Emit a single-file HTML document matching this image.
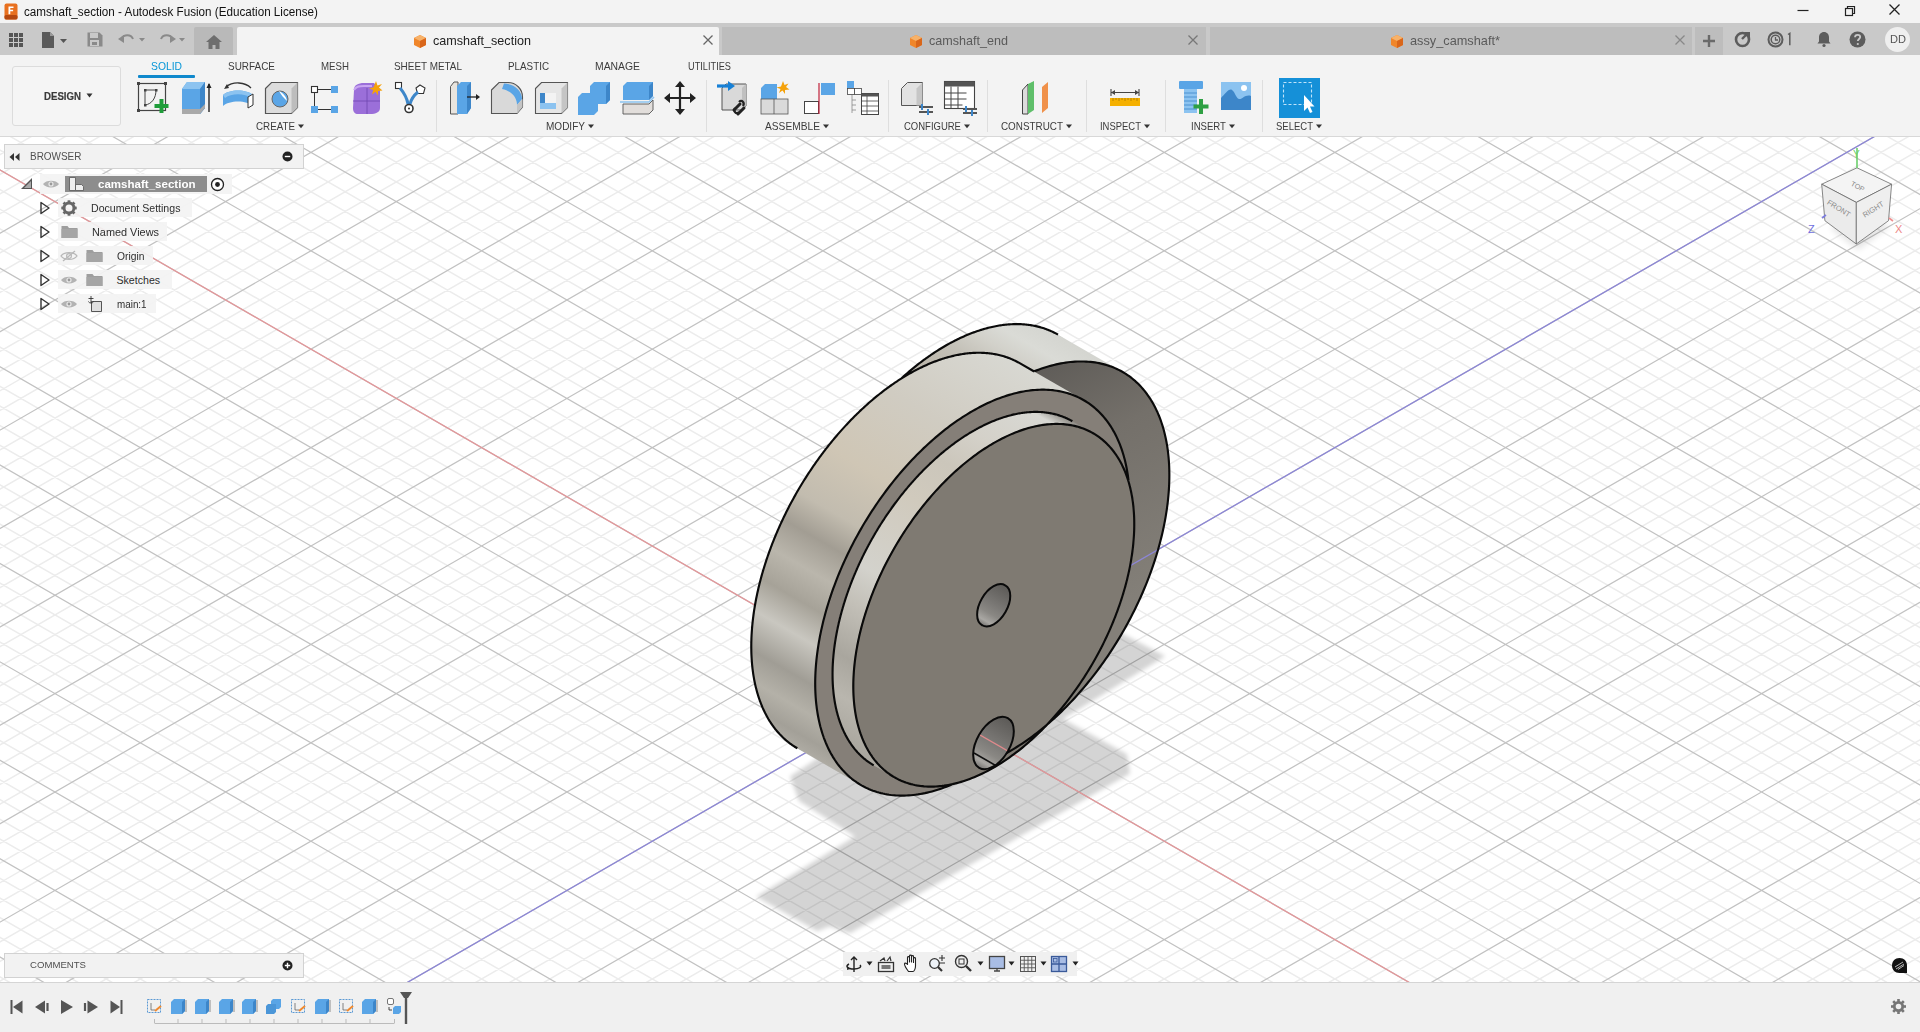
<!DOCTYPE html>
<html><head><meta charset="utf-8"><title>camshaft_section - Autodesk Fusion</title>
<style>
*{box-sizing:border-box;margin:0;padding:0}
html,body{width:1920px;height:1032px;overflow:hidden;background:#f3f3f3;font-family:"Liberation Sans",sans-serif;color:#333;position:relative}
svg{overflow:visible}
</style></head><body>
<svg style="position:absolute;left:0;top:0" width="1920" height="1032" viewBox="0 0 1920 1032"><defs><clipPath id="vpclip"><rect x="0" y="137" width="1920" height="845"/></clipPath></defs><g clip-path="url(#vpclip)"><rect x="0" y="137" width="1920" height="845" fill="#ffffff"/>
<path d="M-10 -977.31L1930 141.30M-10 -957.63L1930 160.98M-10 -937.95L1930 180.66M-10 -898.59L1930 220.02M-10 -878.91L1930 239.70M-10 -859.23L1930 259.38M-10 -839.55L1930 279.06M-10 -800.19L1930 318.42M-10 -780.51L1930 338.10M-10 -760.83L1930 357.78M-10 -741.15L1930 377.46M-10 -701.79L1930 416.82M-10 -682.11L1930 436.50M-10 -662.43L1930 456.18M-10 -642.75L1930 475.86M-10 -603.39L1930 515.22M-10 -583.71L1930 534.90M-10 -564.03L1930 554.58M-10 -544.35L1930 574.26M-10 -504.99L1930 613.62M-10 -485.31L1930 633.30M-10 -465.63L1930 652.98M-10 -445.95L1930 672.66M-10 -406.59L1930 712.02M-10 -386.91L1930 731.70M-10 -367.23L1930 751.38M-10 -347.55L1930 771.06M-10 -308.19L1930 810.42M-10 -288.51L1930 830.10M-10 -268.83L1930 849.78M-10 -249.15L1930 869.46M-10 -209.79L1930 908.82M-10 -190.11L1930 928.50M-10 -170.43L1930 948.18M-10 -150.75L1930 967.86M-10 -111.39L1930 1007.22M-10 -91.71L1930 1026.90M-10 -72.03L1930 1046.58M-10 -52.35L1930 1066.26M-10 -12.99L1930 1105.62M-10 6.69L1930 1125.30M-10 26.37L1930 1144.98M-10 46.05L1930 1164.66M-10 85.41L1930 1204.02M-10 105.09L1930 1223.70M-10 124.77L1930 1243.38M-10 144.45L1930 1263.06M-10 183.81L1930 1302.42M-10 203.49L1930 1322.10M-10 223.17L1930 1341.78M-10 242.85L1930 1361.46M-10 282.21L1930 1400.82M-10 301.89L1930 1420.50M-10 321.57L1930 1440.18M-10 341.25L1930 1459.86M-10 380.61L1930 1499.22M-10 400.29L1930 1518.90M-10 419.97L1930 1538.58M-10 439.65L1930 1558.26M-10 479.01L1930 1597.62M-10 498.69L1930 1617.30M-10 518.37L1930 1636.98M-10 538.05L1930 1656.66M-10 577.41L1930 1696.02M-10 597.09L1930 1715.70M-10 616.77L1930 1735.38M-10 636.45L1930 1755.06M-10 675.81L1930 1794.42M-10 695.49L1930 1814.10M-10 715.17L1930 1833.78M-10 734.85L1930 1853.46M-10 774.21L1930 1892.82M-10 793.89L1930 1912.50M-10 813.57L1930 1932.18M-10 833.25L1930 1951.86M-10 872.61L1930 1991.22M-10 892.29L1930 2010.90M-10 911.97L1930 2030.58M-10 931.65L1930 2050.26M-10 971.01L1930 2089.62M-10 160.35L1930 -958.26M-10 180.03L1930 -938.58M-10 199.71L1930 -918.90M-10 219.39L1930 -899.22M-10 258.75L1930 -859.86M-10 278.43L1930 -840.18M-10 298.11L1930 -820.50M-10 317.79L1930 -800.82M-10 357.15L1930 -761.46M-10 376.83L1930 -741.78M-10 396.51L1930 -722.10M-10 416.19L1930 -702.42M-10 455.55L1930 -663.06M-10 475.23L1930 -643.38M-10 494.91L1930 -623.70M-10 514.59L1930 -604.02M-10 553.95L1930 -564.66M-10 573.63L1930 -544.98M-10 593.31L1930 -525.30M-10 612.99L1930 -505.62M-10 652.35L1930 -466.26M-10 672.03L1930 -446.58M-10 691.71L1930 -426.90M-10 711.39L1930 -407.22M-10 750.75L1930 -367.86M-10 770.43L1930 -348.18M-10 790.11L1930 -328.50M-10 809.79L1930 -308.82M-10 849.15L1930 -269.46M-10 868.83L1930 -249.78M-10 888.51L1930 -230.10M-10 908.19L1930 -210.42M-10 947.55L1930 -171.06M-10 967.23L1930 -151.38M-10 986.91L1930 -131.70M-10 1006.59L1930 -112.02M-10 1045.95L1930 -72.66M-10 1065.63L1930 -52.98M-10 1085.31L1930 -33.30M-10 1104.99L1930 -13.62M-10 1144.35L1930 25.74M-10 1164.03L1930 45.42M-10 1183.71L1930 65.10M-10 1203.39L1930 84.78M-10 1242.75L1930 124.14M-10 1262.43L1930 143.82M-10 1282.11L1930 163.50M-10 1301.79L1930 183.18M-10 1341.15L1930 222.54M-10 1360.83L1930 242.22M-10 1380.51L1930 261.90M-10 1400.19L1930 281.58M-10 1439.55L1930 320.94M-10 1459.23L1930 340.62M-10 1478.91L1930 360.30M-10 1498.59L1930 379.98M-10 1537.95L1930 419.34M-10 1557.63L1930 439.02M-10 1577.31L1930 458.70M-10 1596.99L1930 478.38M-10 1636.35L1930 517.74M-10 1656.03L1930 537.42M-10 1675.71L1930 557.10M-10 1695.39L1930 576.78M-10 1734.75L1930 616.14M-10 1754.43L1930 635.82M-10 1774.11L1930 655.50M-10 1793.79L1930 675.18M-10 1833.15L1930 714.54M-10 1852.83L1930 734.22M-10 1872.51L1930 753.90M-10 1892.19L1930 773.58M-10 1931.55L1930 812.94M-10 1951.23L1930 832.62M-10 1970.91L1930 852.30M-10 1990.59L1930 871.98M-10 2029.95L1930 911.34M-10 2049.63L1930 931.02M-10 2069.31L1930 950.70M-10 2088.99L1930 970.38" stroke="#ececec" stroke-width="1.5" fill="none"/><path d="M-10 -918.27L1930 200.34M-10 -819.87L1930 298.74M-10 -721.47L1930 397.14M-10 -623.07L1930 495.54M-10 -524.67L1930 593.94M-10 -426.27L1930 692.34M-10 -327.87L1930 790.74M-10 -229.47L1930 889.14M-10 -131.07L1930 987.54M-10 -32.67L1930 1085.94M-10 65.73L1930 1184.34M-10 164.13L1930 1282.74M-10 262.53L1930 1381.14M-10 360.93L1930 1479.54M-10 459.33L1930 1577.94M-10 557.73L1930 1676.34M-10 656.13L1930 1774.74M-10 754.53L1930 1873.14M-10 852.93L1930 1971.54M-10 951.33L1930 2069.94M-10 140.67L1930 -977.94M-10 239.07L1930 -879.54M-10 337.47L1930 -781.14M-10 435.87L1930 -682.74M-10 534.27L1930 -584.34M-10 632.67L1930 -485.94M-10 731.07L1930 -387.54M-10 829.47L1930 -289.14M-10 927.87L1930 -190.74M-10 1026.27L1930 -92.34M-10 1124.67L1930 6.06M-10 1223.07L1930 104.46M-10 1321.47L1930 202.86M-10 1419.87L1930 301.26M-10 1518.27L1930 399.66M-10 1616.67L1930 498.06M-10 1715.07L1930 596.46M-10 1813.47L1930 694.86M-10 1911.87L1930 793.26M-10 2010.27L1930 891.66" stroke="#c2c2c2" stroke-width="1.25" fill="none"/>
<filter id="blur" x="-10%" y="-10%" width="120%" height="120%"><feGaussianBlur stdDeviation="2.2"/></filter><polygon points="1124.0,634.5 1165.3,656.3 1063.0,719.0 1127.0,754.3 1130.0,773.5 849.9,933.3 829.5,926.2 817.3,931.3 756.3,896.7 855.0,836.5 799.0,801.0 790.0,776.6 809.0,764.0 900.0,700.0 1050.0,600.0" fill="#000" fill-opacity="0.17" filter="url(#blur)"/>
<path d="M-10 164.13L1930 1282.74" stroke="#e3979a" stroke-width="1.3" fill="none"/>
<path d="M-10 1223.07L1930 104.46" stroke="#8c86d6" stroke-width="1.3" fill="none"/>
<defs><linearGradient id="gA" gradientUnits="userSpaceOnUse" x1="1090.36" y1="353.33" x2="865.06" y2="743.54"><stop offset="0.000" stop-color="#d4d5d0"/><stop offset="0.050" stop-color="#dadbd6"/><stop offset="0.090" stop-color="#d2d1ca"/><stop offset="0.140" stop-color="#c4c1b8"/><stop offset="0.200" stop-color="#bdb8ad"/><stop offset="0.300" stop-color="#b5b0a4"/><stop offset="1.000" stop-color="#a8a398"/></linearGradient><linearGradient id="gB" gradientUnits="userSpaceOnUse" x1="1051.64" y1="381.63" x2="829.29" y2="766.76"><stop offset="0.000" stop-color="#d8d8d2"/><stop offset="0.200" stop-color="#d0ccc2"/><stop offset="0.380" stop-color="#cfc6b5"/><stop offset="0.500" stop-color="#c2bcaf"/><stop offset="0.570" stop-color="#a29d93"/><stop offset="0.640" stop-color="#bab6ac"/><stop offset="0.710" stop-color="#a6a298"/><stop offset="0.780" stop-color="#c9c7c0"/><stop offset="0.860" stop-color="#a09d95"/><stop offset="0.920" stop-color="#b4b1a8"/><stop offset="0.970" stop-color="#a3a098"/><stop offset="1.000" stop-color="#aeaba3"/></linearGradient><linearGradient id="gC" gradientUnits="userSpaceOnUse" x1="1082.73" y1="427.22" x2="884.07" y2="771.31"><stop offset="0.000" stop-color="#8f8c86"/><stop offset="0.030" stop-color="#d8d8d3"/><stop offset="0.150" stop-color="#d4d1c9"/><stop offset="0.250" stop-color="#cbc6bb"/><stop offset="0.370" stop-color="#d0cabd"/><stop offset="0.580" stop-color="#d3d2cc"/><stop offset="0.670" stop-color="#c3c0b8"/><stop offset="0.800" stop-color="#a9a69e"/><stop offset="0.890" stop-color="#b9b6ae"/><stop offset="1.000" stop-color="#a8a59d"/></linearGradient><linearGradient id="gAf" gradientUnits="userSpaceOnUse" x1="1030.00" y1="370.00" x2="1150.00" y2="600.00"><stop offset="0.000" stop-color="#5f5c58"/><stop offset="0.350" stop-color="#74706a"/><stop offset="1.000" stop-color="#848079"/></linearGradient></defs>
<path d="M1058.02 334.65A225.29 130.07 -60 1 1 832.72 724.87A225.29 130.07 -60 1 1 1058.02 334.65Z" fill="url(#gA)" /><polygon points="1058.02,334.65 1122.70,372.00 897.40,762.22 832.72,724.87" fill="url(#gA)" /><path d="M1122.70 372.00A225.29 130.07 -60 1 1 897.40 762.22A225.29 130.07 -60 1 1 1122.70 372.00Z" fill="url(#gA)" />
<path d="M1122.70 372.00A225.29 130.07 -60 1 1 897.40 762.22A225.29 130.07 -60 1 1 1122.70 372.00Z" fill="url(#gAf)" />
<clipPath id="cpAf"><path d="M1122.70 372.00A225.29 130.07 -60 1 1 897.40 762.22A225.29 130.07 -60 1 1 1122.70 372.00Z" fill="#000" /></clipPath>
<path d="M1000 640.70L1250 496.55" stroke="#8c86d6" stroke-width="1.3" clip-path="url(#cpAf)"/>
<path d="M1019.68 363.18A222.35 128.38 -60 1 1 797.32 748.30A222.35 128.38 -60 1 1 1019.68 363.18Z" fill="url(#gB)" /><polygon points="1019.68,363.18 1083.61,400.09 861.25,785.21 797.32,748.30" fill="url(#gB)" /><path d="M1083.61 400.09A222.35 128.38 -60 1 1 861.25 785.21A222.35 128.38 -60 1 1 1083.61 400.09Z" fill="url(#gB)" />
<path d="M1083.61 400.09A222.35 128.38 -60 1 1 861.25 785.21A222.35 128.38 -60 1 1 1083.61 400.09Z" fill="#857f78" />
<path d="M1072.35 421.22A198.67 114.70 -60 1 1 873.69 765.32A198.67 114.70 -60 1 1 1072.35 421.22Z" fill="url(#gC)" /><polygon points="1072.35,421.22 1093.11,433.21 894.45,777.31 873.69,765.32" fill="url(#gC)" /><path d="M1093.11 433.21A198.67 114.70 -60 1 1 894.45 777.31A198.67 114.70 -60 1 1 1093.11 433.21Z" fill="url(#gC)" />
<path d="M1093.11 433.21A198.67 114.70 -60 1 1 894.45 777.31A198.67 114.70 -60 1 1 1093.11 433.21Z" fill="#7f7a72" />
<path d="M1058.02 334.65L1057.13 334.15L1056.23 333.65L1055.32 333.17L1054.41 332.70L1053.50 332.24L1052.57 331.80L1051.64 331.37L1050.70 330.94L1049.76 330.54L1048.81 330.14L1047.85 329.76L1046.89 329.39L1045.92 329.03L1044.94 328.68L1043.96 328.35L1042.97 328.03L1041.98 327.72L1040.97 327.42L1039.97 327.14L1038.96 326.87L1037.94 326.61L1036.91 326.36L1035.89 326.13L1034.85 325.91L1033.81 325.70L1032.76 325.50L1031.71 325.32L1030.66 325.15L1029.59 324.99L1028.53 324.85L1027.45 324.72L1026.38 324.60L1025.29 324.49L1024.21 324.40L1023.11 324.32L1022.02 324.25L1020.92 324.19L1019.81 324.15L1018.70 324.12L1017.58 324.10L1016.46 324.10L1015.34 324.11L1014.21 324.13L1013.07 324.16L1011.94 324.21L1010.79 324.27L1009.65 324.34L1008.50 324.42L1007.35 324.52L1006.19 324.63L1005.03 324.75L1003.86 324.89L1002.69 325.04L1001.52 325.20L1000.35 325.37L999.17 325.56L997.99 325.76L996.80 325.97L995.61 326.19L994.42 326.43L993.22 326.68L992.03 326.94L990.83 327.21L989.62 327.50L988.42 327.80L987.21 328.11L986.00 328.44L984.78 328.77L983.56 329.12L982.35 329.49L981.12 329.86L979.90 330.25L978.68 330.65L977.45 331.06L976.22 331.48L974.99 331.92L973.75 332.37L972.52 332.83L971.28 333.30L970.04 333.78L968.80 334.28L967.56 334.79L966.32 335.31L965.07 335.85L963.83 336.39L962.58 336.95L961.34 337.52L960.09 338.10L958.84 338.69L957.59 339.30L956.34 339.91L955.08 340.54L953.83 341.18L952.58 341.84L951.33 342.50L950.07 343.17L948.82 343.86L947.56 344.56L946.31 345.27L945.06 345.99L943.80 346.72L942.55 347.47L941.29 348.22L940.04 348.99L938.79 349.77L937.53 350.56L936.28 351.36L935.03 352.17L933.78 352.99L932.53 353.82L931.28 354.67L930.03 355.52L928.78 356.39L927.53 357.26L926.29 358.15L925.04 359.05L923.80 359.96L922.56 360.88L921.32 361.81L920.08 362.75L918.84 363.70L917.60 364.66L916.37 365.63L915.14 366.61L913.91 367.60L912.68 368.60L911.45 369.61L910.23 370.63L909.00 371.66L907.78 372.70L906.57 373.75L905.35 374.81L904.14 375.88L902.93 376.96L901.72 378.05M997.10 757.93L999.60 756.69L1002.11 755.42L1004.62 754.09L1007.12 752.72L1009.63 751.30L1012.14 749.84L1014.65 748.33L1017.16 746.77L1019.66 745.18L1022.16 743.53L1024.66 741.85L1027.16 740.12L1029.65 738.35L1032.14 736.53L1034.62 734.67L1037.10 732.78L1039.56 730.84L1042.03 728.86L1044.48 726.84L1046.92 724.78L1049.36 722.68L1051.79 720.54L1054.20 718.36L1056.61 716.15L1059.00 713.90L1061.38 711.61L1063.75 709.29L1066.10 706.93L1068.45 704.54L1070.77 702.12L1073.08 699.66L1075.38 697.16L1077.66 694.64L1079.92 692.08L1082.17 689.49L1084.40 686.88L1086.61 684.23L1088.80 681.55L1090.97 678.85L1093.12 676.11L1095.25 673.35L1097.36 670.57L1099.44 667.76L1101.51 664.92L1103.55 662.06L1105.57 659.17L1107.57 656.27L1109.54 653.34L1111.49 650.39L1113.41 647.42L1115.30 644.42L1117.17 641.41L1119.02 638.38L1120.83 635.34L1122.62 632.27L1124.38 629.19L1126.12 626.10L1127.82 622.99L1129.49 619.87L1131.14 616.73L1132.75 613.58L1134.34 610.42L1135.89 607.25L1137.42 604.07L1138.91 600.88L1140.37 597.68L1141.79 594.47L1143.19 591.26L1144.55 588.04L1145.87 584.82L1147.17 581.59L1148.43 578.35L1149.65 575.12L1150.85 571.88L1152.00 568.64L1153.12 565.41L1154.21 562.17L1155.26 558.93L1156.27 555.70L1157.25 552.46L1158.19 549.24L1159.09 546.01L1159.96 542.79L1160.79 539.58L1161.58 536.37L1162.34 533.18L1163.06 529.99L1163.74 526.80L1164.38 523.63L1164.98 520.47L1165.55 517.33L1166.07 514.19L1166.56 511.07L1167.01 507.96L1167.42 504.86L1167.79 501.78L1168.12 498.72L1168.41 495.68L1168.66 492.65L1168.88 489.64L1169.05 486.65L1169.19 483.68L1169.28 480.73L1169.34 477.80L1169.36 474.89L1169.33 472.01L1169.27 469.15L1169.17 466.32L1169.03 463.50L1168.85 460.72L1168.62 457.96L1168.37 455.23L1168.07 452.53L1167.73 449.85L1167.35 447.21L1166.94 444.59L1166.48 442.00L1165.99 439.45L1165.45 436.93L1164.88 434.43L1164.27 431.98L1163.63 429.55L1162.94 427.16L1162.22 424.81L1161.45 422.49L1160.66 420.20L1159.82 417.95L1158.95 415.74L1158.04 413.57L1157.09 411.43L1156.10 409.34L1155.09 407.28L1154.03 405.26L1152.94 403.28L1151.81 401.34L1150.65 399.45L1149.45 397.59L1148.22 395.78L1146.96 394.01L1145.66 392.28L1144.32 390.60L1142.96 388.96L1141.56 387.36L1140.12 385.81L1138.66 384.30L1137.16 382.84L1135.64 381.43L1134.08 380.06L1132.49 378.74L1130.87 377.46L1129.22 376.23L1127.54 375.05L1125.83 373.91L1124.09 372.83L1122.33 371.79L1120.53 370.80L1118.71 369.86L1116.86 368.97L1114.99 368.12L1113.09 367.33L1111.16 366.59L1109.21 365.89L1107.24 365.25L1105.24 364.65L1103.21 364.11L1101.17 363.61L1099.10 363.17L1097.01 362.78L1094.89 362.43L1092.76 362.14L1090.61 361.90L1088.43 361.71L1086.24 361.57L1084.03 361.49L1081.80 361.45L1079.55 361.46L1077.28 361.53L1075.00 361.64L1072.70 361.81L1070.39 362.03L1068.06 362.30L1065.71 362.62L1063.36 362.99L1060.98 363.41L1058.60 363.88L1056.21 364.40L1053.80 364.97L1051.38 365.60L1048.95 366.27L1046.52 366.99L1044.07 367.76L1041.62 368.58L1039.15 369.45L1036.68 370.37L1034.21 371.34M1019.68 363.18L1018.80 362.68L1017.91 362.19L1017.02 361.71L1016.12 361.25L1015.21 360.80L1014.30 360.36L1013.38 359.93L1012.46 359.52L1011.53 359.12L1010.59 358.73L1009.64 358.35L1008.69 357.98L1007.73 357.63L1006.77 357.28L1005.80 356.96L1004.83 356.64L1003.84 356.33L1002.86 356.04L1001.86 355.76L1000.87 355.49L999.86 355.24L998.85 355.00L997.83 354.77L996.81 354.55L995.79 354.34L994.75 354.15L993.72 353.97L992.67 353.80L991.62 353.65L990.57 353.50L989.51 353.37L988.45 353.26L987.38 353.15L986.31 353.06L985.23 352.98L984.15 352.91L983.06 352.85L981.97 352.81L980.87 352.78L979.77 352.77L978.66 352.76L977.55 352.77L976.44 352.79L975.32 352.82L974.20 352.87L973.07 352.93L971.94 353.00L970.81 353.08L969.67 353.18L968.53 353.29L967.38 353.41L966.23 353.54L965.08 353.69L963.92 353.85L962.76 354.02L961.60 354.20L960.43 354.40L959.26 354.61L958.09 354.83L956.91 355.06L955.73 355.31L954.55 355.57L953.36 355.84L952.17 356.12L950.98 356.42L949.79 356.72L948.60 357.04L947.40 357.38L946.20 357.72L944.99 358.08L943.79 358.45L942.58 358.83L941.37 359.22L940.16 359.63L938.95 360.05L937.73 360.48L936.51 360.92L935.29 361.38L934.07 361.84L932.85 362.32L931.63 362.81L930.40 363.31L929.18 363.83L927.95 364.36L926.72 364.89L925.49 365.44L924.26 366.01L923.03 366.58L921.79 367.17L920.56 367.76L919.32 368.37L918.09 368.99L916.85 369.62L915.62 370.27L914.38 370.92L913.14 371.59L911.90 372.27L910.67 372.96L909.43 373.66L908.19 374.37L906.95 375.09L905.71 375.83L904.48 376.57L903.24 377.33L902.00 378.10L900.77 378.88L899.53 379.66L898.29 380.47L897.06 381.28L895.82 382.10L894.59 382.93L893.36 383.78L892.13 384.63L890.90 385.50L889.67 386.37L888.44 387.26L887.21 388.15L885.99 389.06L884.76 389.98L883.54 390.90L882.32 391.84L881.10 392.79L879.88 393.75L878.66 394.72L877.45 395.69L876.23 396.68L875.02 397.68L873.82 398.69L872.61 399.71L871.41 400.73L870.20 401.77L869.00 402.81L867.81 403.87L866.61 404.94L865.42 406.01L864.23 407.09L863.04 408.19L861.86 409.29L860.68 410.40L859.50 411.52L858.33 412.65L857.16 413.79L855.99 414.93L854.82 416.09L853.66 417.25L852.50 418.43L851.35 419.61L850.20 420.80L849.05 421.99L847.90 423.20L846.76 424.42L845.63 425.64L844.49 426.87L843.36 428.11L842.24 429.35L841.12 430.61L840.00 431.87L838.89 433.14L837.78 434.42L836.68 435.70L835.58 437.00L834.49 438.30L833.40 439.60L832.31 440.92L831.23 442.24L830.15 443.57L829.08 444.90L828.02 446.25L826.96 447.59L825.90 448.95L824.85 450.31L823.80 451.68L822.76 453.06L821.73 454.44L820.70 455.83L819.68 457.22L818.66 458.62L817.64 460.03L816.64 461.44L815.63 462.86L814.64 464.28L813.65 465.71L812.66 467.15L811.69 468.59L810.71 470.03L809.75 471.48L808.79 472.94L807.83 474.40L806.88 475.87L805.94 477.34L805.01 478.82L804.08 480.30L803.16 481.79L802.24 483.28L801.33 484.77L800.43 486.27L799.53 487.77L798.64 489.28L797.76 490.79L796.89 492.31L796.02 493.83L795.16 495.36L794.30 496.88L793.46 498.41L792.62 499.95L791.78 501.49L790.96 503.03L790.14 504.57L789.33 506.12L788.52 507.67L787.73 509.23L786.94 510.78L786.16 512.34L785.38 513.91L784.62 515.47L783.86 517.04L783.11 518.61L782.36 520.18L781.63 521.76L780.90 523.33L780.18 524.91L779.47 526.49L778.77 528.08L778.07 529.66L777.39 531.25L776.71 532.83L776.03 534.42L775.37 536.01L774.72 537.60L774.07 539.19L773.43 540.79L772.80 542.38L772.18 543.98L771.57 545.57L770.97 547.17L770.37 548.77L769.78 550.36L769.21 551.96L768.64 553.56L768.07 555.16L767.52 556.76L766.98 558.35L766.44 559.95L765.92 561.55L765.40 563.15L764.89 564.74L764.39 566.34L763.90 567.94L763.42 569.53L762.95 571.13L762.48 572.72L762.03 574.31L761.58 575.90L761.15 577.49L760.72 579.08L760.30 580.67L759.89 582.25L759.49 583.83L759.10 585.42L758.72 587.00L758.35 588.58L757.99 590.15L757.63 591.73L757.29 593.30L756.96 594.87L756.63 596.43L756.31 598.00L756.01 599.56L755.71 601.12L755.42 602.68L755.15 604.23L754.88 605.78L754.62 607.33L754.37 608.87L754.13 610.41L753.90 611.95L753.68 613.48L753.47 615.01L753.27 616.54L753.08 618.06L752.89 619.58L752.72 621.10L752.56 622.61L752.41 624.11L752.26 625.62L752.13 627.12L752.00 628.61L751.89 630.10L751.78 631.58L751.69 633.06L751.60 634.54L751.53 636.01L751.46 637.47L751.41 638.93L751.36 640.39L751.32 641.84L751.30 643.28L751.28 644.72L751.27 646.16L751.28 647.59L751.29 649.01L751.31 650.42L751.34 651.84L751.38 653.24L751.43 654.64L751.50 656.03L751.57 657.42L751.65 658.80L751.74 660.17L751.84 661.54L751.95 662.90L752.06 664.25L752.19 665.60L752.33 666.94L752.48 668.27L752.64 669.60L752.81 670.92L752.98 672.23L753.17 673.54L753.37 674.84L753.57 676.13L753.79 677.41L754.01 678.68L754.25 679.95L754.49 681.21L754.75 682.47L755.01 683.71L755.28 684.95L755.57 686.17L755.86 687.40L756.16 688.61L756.47 689.81L756.79 691.01L757.12 692.19L757.46 693.37L757.81 694.54L758.17 695.71L758.53 696.86L758.91 698.00L759.30 699.14L759.69 700.27L760.10 701.38L760.51 702.49L760.93 703.59L761.36 704.68L761.81 705.76L762.26 706.83L762.71 707.90L763.18 708.95L763.66 709.99L764.15 711.03L764.64 712.05L765.14 713.07L765.66 714.07L766.18 715.07L766.71 716.05L767.25 717.03L767.80 717.99L768.35 718.95L768.92 719.89L769.49 720.83L770.08 721.75L770.67 722.67L771.27 723.57L771.88 724.47L772.49 725.35L773.12 726.22L773.75 727.08L774.39 727.93L775.04 728.78L775.70 729.61L776.37 730.42L777.04 731.23L777.73 732.03L778.42 732.82L779.12 733.59L779.83 734.36L780.54 735.11L781.26 735.85L782.00 736.59L782.73 737.31L783.48 738.01L784.24 738.71L785.00 739.40L785.77 740.07L786.55 740.74L787.33 741.39L788.12 742.03L788.92 742.66L789.73 743.27L790.55 743.88L791.37 744.47L792.20 745.06L793.03 745.63L793.88 746.19L794.73 746.73L795.59 747.27L796.45 747.79L797.32 748.30M1019.68 363.18L1034.18 371.55M972.43 411.10L969.95 412.55L967.48 414.05L965.01 415.59L962.53 417.17L960.06 418.80L957.60 420.47L955.13 422.19L952.68 423.94L950.22 425.74L947.77 427.58L945.33 429.46L942.90 431.38L940.47 433.34L938.05 435.34L935.64 437.38L933.23 439.46L930.84 441.58L928.46 443.73L926.09 445.92L923.73 448.15L921.38 450.41L919.04 452.71L916.72 455.04L914.41 457.41L912.12 459.81L909.84 462.24L907.58 464.71L905.33 467.20L903.10 469.73L900.89 472.29L898.69 474.88L896.51 477.50L894.35 480.14L892.21 482.82L890.09 485.52L888.00 488.25L885.92 491.00L883.86 493.78L881.83 496.59L879.81 499.41L877.83 502.26L875.86 505.14L873.92 508.03L872.00 510.95L870.11 513.88L868.24 516.84L866.40 519.81L864.58 522.81L862.80 525.82L861.04 528.84L859.30 531.88L857.60 534.94L855.92 538.01L854.27 541.10L852.65 544.20L851.06 547.31L849.51 550.43L847.98 553.56L846.48 556.70L845.01 559.85L843.58 563.01L842.18 566.17L840.80 569.35L839.47 572.52L838.16 575.71L836.89 578.89L835.65 582.08L834.45 585.28L833.28 588.47L832.14 591.67L831.04 594.86L829.98 598.06L828.95 601.26L827.95 604.45L826.99 607.64L826.07 610.82L825.19 614.00L824.34 617.18L823.52 620.35L822.75 623.51L822.01 626.67L821.31 629.81L820.64 632.95L820.01 636.08L819.43 639.20L818.87 642.30L818.36 645.39L817.89 648.47L817.45 651.54L817.05 654.59L816.69 657.63L816.37 660.65L816.09 663.65L815.85 666.64L815.64 669.60L815.48 672.55L815.35 675.48L815.26 678.39L815.21 681.27L815.20 684.14L815.23 686.98L815.30 689.80L815.41 692.59L815.56 695.36L815.74 698.11L815.96 700.83L816.23 703.52L816.53 706.18L816.87 708.82L817.25 711.42L817.66 714.00L818.12 716.55L818.61 719.06L819.15 721.55L819.72 724.00L820.32 726.42L820.97 728.81L821.65 731.16L822.37 733.48L823.13 735.77L823.92 738.01L824.76 740.23L825.62 742.40L826.53 744.54L827.47 746.64L828.45 748.71L829.46 750.73L830.51 752.72L831.59 754.66L832.71 756.57L833.86 758.43L835.05 760.26L836.27 762.04L837.52 763.78L838.81 765.48L840.13 767.13L841.49 768.74L842.87 770.31L844.29 771.83L845.74 773.31L847.22 774.75L848.74 776.14L850.28 777.48L851.85 778.78L853.46 780.03L855.09 781.24L856.75 782.40L858.45 783.51L860.17 784.57L861.91 785.59L863.69 786.56L865.49 787.48L867.32 788.35L869.17 789.17L871.05 789.95L872.96 790.68L874.89 791.35L876.84 791.98L878.82 792.56L880.82 793.09L882.84 793.57L884.89 794.00L886.95 794.38L889.04 794.71L891.15 794.99L893.28 795.21L895.43 795.39L897.60 795.52L899.78 795.60L901.99 795.63L904.21 795.61L906.45 795.53L908.71 795.41L910.98 795.24L913.26 795.01L915.57 794.74L917.88 794.42L920.21 794.04L922.55 793.62L924.91 793.15L927.27 792.62L929.65 792.05L932.04 791.43L934.43 790.76L936.84 790.04L939.26 789.27L941.68 788.45L944.11 787.58L946.55 786.66L949.00 785.70L951.45 784.69M1128.49 480.45L1128.17 477.80L1127.81 475.18L1127.41 472.59L1126.97 470.02L1126.50 467.49L1125.99 464.99L1125.43 462.52L1124.85 460.08L1124.22 457.68L1123.55 455.31L1122.85 452.97L1122.11 450.67L1121.34 448.41L1120.52 446.17L1119.67 443.98L1118.79 441.82L1117.87 439.70L1116.91 437.62L1115.91 435.58L1114.88 433.57L1113.82 431.61L1112.72 429.68L1111.58 427.79L1110.41 425.95L1109.21 424.15L1107.97 422.39L1106.70 420.67L1105.39 418.99L1104.06 417.36L1102.68 415.77L1101.28 414.22L1099.85 412.72L1098.38 411.26L1096.88 409.85L1095.35 408.48L1093.80 407.16L1092.21 405.89L1090.59 404.66L1088.94 403.48L1087.26 402.34L1085.56 401.25L1083.82 400.21L1082.06 399.22L1080.28 398.28L1078.46 397.38L1076.62 396.53L1074.75 395.73L1072.86 394.98L1070.94 394.28L1069.00 393.63L1067.03 393.02L1065.05 392.47L1063.03 391.97L1061.00 391.51L1058.94 391.11L1056.86 390.75L1054.77 390.45L1052.65 390.19L1050.51 389.99L1048.35 389.84L1046.17 389.73L1043.97 389.68L1041.76 389.68L1039.53 389.72L1037.28 389.82L1035.02 389.97L1032.74 390.17L1030.45 390.42L1028.14 390.71L1025.82 391.06L1023.48 391.46L1021.13 391.91L1018.77 392.41L1016.40 392.96L1014.02 393.56L1011.63 394.20L1009.22 394.90L1006.81 395.64L1004.39 396.44L1001.96 397.28L999.53 398.17L997.09 399.11L994.64 400.10L992.18 401.13L989.73 402.22L987.26 403.35L984.80 404.52L982.33 405.75L979.85 407.02L977.38 408.33L974.91 409.69L972.43 411.10M1072.35 421.22L1071.57 420.77L1070.78 420.34L1069.98 419.91L1069.18 419.50L1068.37 419.10L1067.55 418.70L1066.73 418.32L1065.90 417.95L1065.07 417.59L1064.23 417.24L1063.39 416.90L1062.54 416.58L1061.68 416.26L1060.82 415.96L1059.96 415.66L1059.08 415.38L1058.21 415.11L1057.33 414.84L1056.44 414.59L1055.55 414.36L1054.65 414.13L1053.75 413.91L1052.84 413.70L1051.93 413.51L1051.01 413.33L1050.09 413.15L1049.16 412.99L1048.23 412.84L1047.29 412.70L1046.35 412.58L1045.40 412.46L1044.45 412.36L1043.50 412.26L1042.54 412.18L1041.58 412.11L1040.61 412.05L1039.64 412.00L1038.66 411.96L1037.68 411.93L1036.70 411.92L1035.71 411.91L1034.72 411.92L1033.72 411.94L1032.72 411.97L1031.72 412.01L1030.71 412.06L1029.70 412.13L1028.69 412.20L1027.67 412.29L1026.65 412.38L1025.63 412.49L1024.60 412.61L1023.57 412.74L1022.54 412.88L1021.50 413.04L1020.46 413.20L1019.42 413.38L1018.37 413.56L1017.32 413.76L1016.27 413.97L1015.22 414.19L1014.16 414.42L1013.10 414.66L1012.04 414.91L1010.98 415.18L1009.91 415.45L1008.84 415.74L1007.77 416.04L1006.70 416.35L1005.63 416.66L1004.55 417.00L1003.47 417.34L1002.39 417.69L1001.31 418.05L1000.22 418.42L999.14 418.81L998.05 419.20L996.96 419.61L995.87 420.03L994.78 420.46L993.68 420.89L992.59 421.34L991.49 421.80L990.40 422.27L989.30 422.75L988.20 423.25L987.10 423.75L986.00 424.26L984.90 424.78L983.79 425.32L982.69 425.86L981.59 426.42L980.48 426.98L979.38 427.56L978.27 428.14L977.17 428.74L976.06 429.34L974.96 429.96L973.85 430.58L972.74 431.22L971.64 431.87L970.53 432.52L969.43 433.19L968.32 433.86L967.21 434.55L966.11 435.25L965.01 435.95L963.90 436.67L962.80 437.39L961.70 438.13L960.59 438.87L959.49 439.62L958.39 440.39L957.29 441.16L956.19 441.94L955.10 442.73L954.00 443.54L952.90 444.35L951.81 445.17L950.72 445.99L949.63 446.83L948.54 447.68L947.45 448.53L946.36 449.40L945.28 450.27L944.19 451.16L943.11 452.05L942.03 452.95L940.95 453.86L939.88 454.77L938.80 455.70L937.73 456.64L936.66 457.58L935.59 458.53L934.53 459.49L933.47 460.46L932.41 461.43L931.35 462.42L930.29 463.41L929.24 464.41L928.19 465.42L927.15 466.44L926.10 467.46L925.06 468.50L924.02 469.54L922.99 470.58L921.96 471.64L920.93 472.70L919.90 473.77L918.88 474.85L917.86 475.94L916.84 477.03L915.83 478.13L914.82 479.23L913.82 480.35L912.82 481.47L911.82 482.60L910.83 483.73L909.84 484.87L908.85 486.02L907.87 487.18L906.89 488.34L905.92 489.50L904.95 490.68L903.98 491.86L903.02 493.05L902.06 494.24L901.11 495.44L900.16 496.64L899.22 497.86L898.28 499.07L897.35 500.30L896.42 501.53L895.49 502.76L894.57 504.00L893.66 505.25L892.75 506.50L891.84 507.75L890.94 509.02L890.05 510.28L889.16 511.55L888.27 512.83L887.39 514.11L886.52 515.40L885.65 516.69L884.79 517.99L883.93 519.29L883.08 520.60L882.23 521.91L881.39 523.22L880.55 524.54L879.72 525.87L878.90 527.19L878.08 528.53L877.27 529.86L876.46 531.20L875.66 532.54L874.87 533.89L874.08 535.24L873.30 536.60L872.52 537.96L871.75 539.32L870.99 540.68L870.23 542.05L869.48 543.42L868.74 544.80L868.00 546.17L867.27 547.55L866.54 548.94L865.82 550.32L865.11 551.71L864.41 553.10L863.71 554.50L863.02 555.89L862.33 557.29L861.66 558.69L860.98 560.10L860.32 561.50L859.66 562.91L859.01 564.32L858.37 565.73L857.74 567.14L857.11 568.55L856.49 569.97L855.87 571.38L855.27 572.80L854.67 574.22L854.07 575.64L853.49 577.06L852.91 578.49L852.34 579.91L851.78 581.34L851.22 582.76L850.68 584.19L850.14 585.61L849.61 587.04L849.08 588.47L848.56 589.89L848.05 591.32L847.55 592.75L847.06 594.18L846.57 595.61L846.10 597.03L845.63 598.46L845.16 599.89L844.71 601.32L844.26 602.74L843.82 604.17L843.39 605.59L842.97 607.02L842.56 608.44L842.15 609.86L841.75 611.28L841.36 612.70L840.98 614.12L840.61 615.54L840.24 616.96L839.89 618.37L839.54 619.79L839.20 621.20L838.86 622.61L838.54 624.02L838.23 625.42L837.92 626.83L837.62 628.23L837.33 629.63L837.05 631.03L836.77 632.42L836.51 633.81L836.25 635.21L836.00 636.59L835.76 637.98L835.53 639.36L835.31 640.74L835.09 642.12L834.89 643.49L834.69 644.86L834.50 646.23L834.32 647.59L834.15 648.95L833.99 650.31L833.84 651.66L833.69 653.01L833.55 654.36L833.43 655.70L833.31 657.04L833.20 658.38L833.09 659.71L833.00 661.03L832.91 662.36L832.84 663.67L832.77 664.99L832.71 666.30L832.66 667.60L832.62 668.90L832.59 670.20L832.56 671.49L832.55 672.77L832.54 674.06L832.54 675.33L832.56 676.60L832.58 677.87L832.60 679.13L832.64 680.38L832.69 681.63L832.74 682.88L832.80 684.12L832.88 685.35L832.96 686.58L833.04 687.80L833.14 689.01L833.25 690.22L833.36 691.43L833.49 692.62L833.62 693.82L833.76 695.00L833.91 696.18L834.07 697.35L834.24 698.52L834.41 699.68L834.60 700.83L834.79 701.98L834.99 703.12L835.20 704.25L835.42 705.38L835.65 706.50L835.88 707.61L836.13 708.71L836.38 709.81L836.64 710.90L836.91 711.98L837.19 713.06L837.47 714.13L837.77 715.19L838.07 716.24L838.38 717.29L838.70 718.33L839.03 719.36L839.37 720.38L839.71 721.39L840.06 722.40L840.43 723.40L840.79 724.39L841.17 725.37L841.56 726.35L841.95 727.31L842.35 728.27L842.76 729.22L843.18 730.16L843.61 731.09L844.04 732.02L844.49 732.93L844.94 733.84L845.39 734.74L845.86 735.62L846.33 736.50L846.82 737.38L847.31 738.24L847.80 739.09L848.31 739.94L848.82 740.77L849.34 741.60L849.87 742.42L850.41 743.22L850.95 744.02L851.50 744.81L852.06 745.59L852.63 746.36L853.20 747.12L853.78 747.87L854.37 748.61L854.96 749.35L855.57 750.07L856.18 750.78L856.80 751.48L857.42 752.18L858.05 752.86L858.69 753.53L859.34 754.20L859.99 754.85L860.65 755.49L861.32 756.13L861.99 756.75L862.67 757.36L863.36 757.97L864.06 758.56L864.76 759.14L865.47 759.71L866.18 760.28L866.90 760.83L867.63 761.37L868.37 761.90L869.11 762.42L869.85 762.93L870.61 763.43L871.37 763.92L872.14 764.40L872.91 764.86L873.69 765.32M993.78 443.05L991.56 444.35L989.34 445.69L987.12 447.07L984.91 448.50L982.70 449.96L980.48 451.45L978.28 452.99L976.07 454.57L973.87 456.18L971.68 457.83L969.49 459.52L967.31 461.24L965.13 463.00L962.96 464.79L960.80 466.62L958.65 468.49L956.51 470.38L954.37 472.32L952.25 474.28L950.13 476.28L948.03 478.31L945.93 480.37L943.85 482.46L941.79 484.59L939.73 486.74L937.69 488.93L935.66 491.14L933.65 493.38L931.65 495.65L929.67 497.94L927.70 500.27L925.75 502.61L923.82 504.99L921.90 507.39L920.01 509.81L918.13 512.26L916.27 514.73L914.43 517.23L912.60 519.74L910.80 522.28L909.02 524.84L907.26 527.41L905.53 530.01L903.81 532.63L902.12 535.26L900.45 537.91L898.80 540.58L897.18 543.27L895.58 545.97L894.00 548.68L892.45 551.41L890.93 554.15L889.43 556.91L887.96 559.67L886.51 562.45L885.09 565.24L883.70 568.04L882.34 570.85L881.00 573.67L879.69 576.49L878.41 579.32L877.16 582.16L875.93 585.01L874.74 587.86L873.58 590.71L872.44 593.57L871.34 596.43L870.27 599.29L869.23 602.15L868.22 605.02L867.24 607.88L866.29 610.75L865.37 613.61L864.49 616.47L863.64 619.33L862.82 622.18L862.03 625.03L861.28 627.88L860.56 630.72L859.87 633.55L859.22 636.38L858.60 639.20L858.01 642.01L857.46 644.81L856.94 647.60L856.45 650.38L856.00 653.15L855.59 655.91L855.21 658.65L854.86 661.38L854.55 664.10L854.27 666.80L854.03 669.49L853.82 672.16L853.65 674.81L853.51 677.45L853.41 680.07L853.34 682.67L853.31 685.25L853.31 687.81L853.35 690.35L853.42 692.87L853.52 695.37L853.67 697.85L853.84 700.30L854.06 702.73L854.30 705.13L854.59 707.51L854.90 709.86L855.25 712.19L855.64 714.49L856.06 716.76L856.52 719.01L857.01 721.23L857.53 723.41L858.09 725.57L858.68 727.70L859.30 729.80L859.96 731.87L860.65 733.90L861.38 735.90L862.13 737.88L862.93 739.81L863.75 741.72L864.60 743.59L865.49 745.42L866.41 747.22L867.37 748.99L868.35 750.72L869.36 752.41L870.41 754.07L871.49 755.69L872.59 757.27L873.73 758.81L874.90 760.32L876.10 761.78L877.32 763.21L878.58 764.60L879.86 765.95L881.17 767.25L882.52 768.52L883.88 769.75L885.28 770.94L886.70 772.08L888.15 773.18L889.63 774.24L891.13 775.26L892.66 776.24L894.21 777.17L895.79 778.06L897.39 778.91L899.02 779.72L900.67 780.48L902.34 781.19L904.04 781.87L905.76 782.50L907.50 783.08L909.26 783.62L911.04 784.12L912.84 784.57L914.67 784.98L916.51 785.34L918.38 785.66L920.26 785.93L922.16 786.15L924.08 786.34L926.01 786.47L927.96 786.56L929.93 786.61L931.92 786.61L933.92 786.57L935.93 786.48L937.96 786.34L940.00 786.16L942.06 785.94L944.13 785.67L946.21 785.35L948.31 784.99L950.41 784.59L952.53 784.14L954.65 783.64L956.79 783.10L958.94 782.52L961.09 781.89L963.25 781.22L965.42 780.50L967.60 779.74L969.78 778.94L971.97 778.09L974.17 777.20L976.37 776.27L978.57 775.30L980.78 774.28L982.99 773.22L985.20 772.12L987.42 770.98L989.64 769.79L991.86 768.57L994.08 767.30L996.29 765.99L998.51 764.65L1000.73 763.26L1002.95 761.83L1005.16 760.37L1007.37 758.86L1009.58 757.32L1011.78 755.74L1013.98 754.12L1016.17 752.47L1018.36 750.78L1020.54 749.05L1022.72 747.29L1024.88 745.49L1027.04 743.65L1029.20 741.78L1031.34 739.88L1033.47 737.94L1035.60 735.97L1037.71 733.97L1039.81 731.94L1041.90 729.87L1043.98 727.77L1046.05 725.65L1048.10 723.49L1050.14 721.30L1052.17 719.09L1054.18 716.84L1056.17 714.57L1058.15 712.27L1060.12 709.94L1062.07 707.59L1064.00 705.21L1065.91 702.81L1067.81 700.38L1069.68 697.93L1071.54 695.46L1073.38 692.96L1075.20 690.44L1077.00 687.90L1078.77 685.34L1080.53 682.76L1082.26 680.16L1083.98 677.54L1085.67 674.91L1087.33 672.25L1088.98 669.58L1090.60 666.90L1092.19 664.19L1093.76 661.48L1095.31 658.75L1096.83 656.00L1098.33 653.25L1099.80 650.48L1101.24 647.70L1102.65 644.91L1104.04 642.11L1105.40 639.30L1106.74 636.48L1108.04 633.65L1109.32 630.82L1110.57 627.98L1111.79 625.13L1112.98 622.28L1114.13 619.43L1115.26 616.57L1116.36 613.71L1117.43 610.85L1118.47 607.98L1119.48 605.12L1120.45 602.25L1121.39 599.39L1122.31 596.53L1123.19 593.67L1124.03 590.81L1124.85 587.96L1125.63 585.11L1126.38 582.26L1127.10 579.42L1127.78 576.59L1128.43 573.77L1129.04 570.95L1129.63 568.14L1130.17 565.34L1130.69 562.55L1131.17 559.77L1131.61 557.00L1132.03 554.25L1132.40 551.51L1132.74 548.78L1133.05 546.06L1133.32 543.36L1133.56 540.67L1133.77 538.01L1133.93 535.35L1134.07 532.72L1134.17 530.10L1134.23 527.50L1134.26 524.93L1134.25 522.37L1134.21 519.83L1134.13 517.31L1134.02 514.82L1133.87 512.35L1133.69 509.90L1133.47 507.47L1133.22 505.07L1132.93 502.70L1132.61 500.35L1132.26 498.02L1131.87 495.73L1131.44 493.46L1130.98 491.22L1130.49 489.00L1129.96 486.82L1129.40 484.66L1128.80 482.54L1128.17 480.44L1127.51 478.38L1126.81 476.35L1126.08 474.35L1125.32 472.39L1124.53 470.45L1123.70 468.55L1122.84 466.69L1121.95 464.86L1121.02 463.06L1120.07 461.30L1119.08 459.58L1118.06 457.89L1117.01 456.24L1115.93 454.62L1114.82 453.05L1113.68 451.51L1112.50 450.01L1111.30 448.55L1110.07 447.12L1108.81 445.74L1107.53 444.40L1106.21 443.09L1104.86 441.83L1103.49 440.61L1102.09 439.43L1100.67 438.29L1099.21 437.19L1097.73 436.14L1096.23 435.12L1094.70 434.15L1093.14 433.23L1091.56 432.34L1089.95 431.50L1088.32 430.70L1086.67 429.94L1084.99 429.23L1083.30 428.57L1081.57 427.94L1079.83 427.36L1078.07 426.83L1076.28 426.34L1074.47 425.89L1072.65 425.49L1070.80 425.14L1068.94 424.83L1067.05 424.56L1065.15 424.34L1063.23 424.16L1061.29 424.03L1059.34 423.95L1057.37 423.91L1055.38 423.91L1053.38 423.96L1051.36 424.06L1049.33 424.20L1047.28 424.39L1045.22 424.62L1043.15 424.89L1041.07 425.21L1038.97 425.58L1036.87 425.99L1034.75 426.45L1032.62 426.95L1030.48 427.49L1028.34 428.08L1026.18 428.72L1024.02 429.39L1021.85 430.12L1019.67 430.88L1017.49 431.69L1015.30 432.54L1013.10 433.44L1010.90 434.37L1008.70 435.36L1006.49 436.38L1004.28 437.44L1002.06 438.55L999.85 439.70L997.63 440.89L995.41 442.12L993.19 443.39L990.97 444.70" stroke="#0a0a0a" stroke-width="2.15" fill="none" stroke-linejoin="round"/>
<defs><linearGradient id="h1" gradientUnits="userSpaceOnUse" x1="1005.21" y1="585.36" x2="982.19" y2="625.24"><stop offset="0.000" stop-color="#5c5a57"/><stop offset="0.250" stop-color="#6b6966"/><stop offset="0.500" stop-color="#7b7976"/><stop offset="0.700" stop-color="#8a8884"/><stop offset="0.880" stop-color="#a9a7a3"/><stop offset="1.000" stop-color="#777572"/></linearGradient></defs><path d="M1005.21 585.36A23.03 13.29 -60 1 1 982.19 625.24A23.03 13.29 -60 1 1 1005.21 585.36Z" fill="url(#h1)" /><path d="M1005.21 585.36A23.03 13.29 -60 1 1 982.19 625.24A23.03 13.29 -60 1 1 1005.21 585.36Z" fill="none" stroke="#0a0a0a" stroke-width="2"/>
<defs><linearGradient id="h2" gradientUnits="userSpaceOnUse" x1="1007.83" y1="718.18" x2="979.17" y2="767.82"><stop offset="0.000" stop-color="#5c5a57"/><stop offset="0.250" stop-color="#6b6966"/><stop offset="0.500" stop-color="#7b7976"/><stop offset="0.700" stop-color="#8a8884"/><stop offset="0.880" stop-color="#a9a7a3"/><stop offset="1.000" stop-color="#777572"/></linearGradient></defs><path d="M1007.83 718.18A28.66 16.55 -60 1 1 979.17 767.82A28.66 16.55 -60 1 1 1007.83 718.18Z" fill="url(#h2)" /><clipPath id="cph2"><path d="M1007.83 718.18A28.66 16.55 -60 1 1 979.17 767.82A28.66 16.55 -60 1 1 1007.83 718.18Z" fill="#000" /></clipPath><g clip-path="url(#cph2)"><path d="M960 723.44L1030 763.80" stroke="#e08a8c" stroke-width="1.3"/><path d="M974 753 L1000 768" stroke="#111" stroke-width="1.6"/></g><path d="M1007.83 718.18A28.66 16.55 -60 1 1 979.17 767.82A28.66 16.55 -60 1 1 1007.83 718.18Z" fill="none" stroke="#0a0a0a" stroke-width="2"/>
<defs><filter id="cs" x="-50%%" y="-50%%" width="200%%" height="200%%"><feGaussianBlur stdDeviation="3"/></filter></defs>
<polygon points="1830.0,228.0 1858.0,250.0 1890.0,226.0 1860.0,212.0" fill="#000" opacity="0.10" filter="url(#cs)"/>
<polygon points="1857.0,167.8 1891.6,184.2 1856.3,202.4 1821.7,184.2" fill="#f4f4f4" stroke="#6a6a6a" stroke-width="0.8"/>
<polygon points="1821.7,184.2 1856.3,202.4 1856.3,244.0 1824.9,220.7" fill="#ebebeb" stroke="#6a6a6a" stroke-width="0.8"/>
<polygon points="1856.3,202.4 1891.6,184.2 1888.5,220.7 1856.3,244.0" fill="#efefef" stroke="#6a6a6a" stroke-width="0.8"/>
<path d="M1857 168 V148" stroke="#6ccf6c" stroke-width="1.6"/>
<path d="M1822 218 L1826 215" stroke="#7b7bdf" stroke-width="1.6"/>
<path d="M1889 218 L1893 221" stroke="#ee8f8f" stroke-width="1.6"/>
<text x="1858" y="189" font-family="Liberation Sans" font-size="7" fill="#8c8c8c" transform="rotate(28 1858 186)" text-anchor="middle">TOP</text>
<text x="1839" y="211" font-family="Liberation Sans" font-size="7.5" fill="#8c8c8c" transform="rotate(32 1839 208)" text-anchor="middle">FRONT</text>
<text x="1873" y="212" font-family="Liberation Sans" font-size="7.5" fill="#8c8c8c" transform="rotate(-32 1873 209)" text-anchor="middle">RIGHT</text>
<text x="1808" y="233" font-family="Liberation Sans" font-size="11" fill="#7070e0">Z</text>
<text x="1895" y="233" font-family="Liberation Sans" font-size="11" fill="#ee8888">X</text>
<text x="1853" y="158" font-family="Liberation Sans" font-size="10" fill="#6ccf6c">Y</text>
</g></svg>
<div style="position:absolute;left:0;top:0;width:1920px;height:23px;background:#f3f3f3"></div>
<svg style="position:absolute;left:4px;top:3px;" width="14" height="17" viewBox="0 0 14 17"><rect x="0.5" y="0.5" width="13" height="16" rx="2" fill="#e8701f"/><rect x="0.5" y="12" width="13" height="4.5" rx="1.5" fill="#b5480f"/><path d="M4.5 3.5h5v1.6h-3.2v1.6h2.8v1.5h-2.8v3h-1.8z" fill="#fff"/></svg>
<div style="position:absolute;left:24.00px;top:5.72px;font-size:12.00px;line-height:12.00px;color:#111;white-space:nowrap;transform-origin:0 0;transform:scaleX(0.9730);">camshaft_section - Autodesk Fusion (Education License)</div>
<svg style="position:absolute;left:1790px;top:0px;" width="130" height="23" viewBox="0 0 130 23"><path d="M7.5 10.5h11" stroke="#222" stroke-width="1.2"/><rect x="55.5" y="8.5" width="7" height="7" fill="none" stroke="#222" stroke-width="1.2"/><path d="M57.5 8.5v-2h7v7h-2" fill="none" stroke="#222" stroke-width="1.2"/><path d="M99.5 4.5l10 10M109.5 4.5l-10 10" stroke="#222" stroke-width="1.3"/></svg>
<div style="position:absolute;left:0;top:23px;width:1920px;height:32px;background:#c9c9c9"></div>
<svg style="position:absolute;left:8px;top:32px;" width="16" height="16" viewBox="0 0 16 16"><rect x="1" y="1" width="4" height="4" fill="#555"/><rect x="1" y="6" width="4" height="4" fill="#555"/><rect x="1" y="11" width="4" height="4" fill="#555"/><rect x="6" y="1" width="4" height="4" fill="#555"/><rect x="6" y="6" width="4" height="4" fill="#555"/><rect x="6" y="11" width="4" height="4" fill="#555"/><rect x="11" y="1" width="4" height="4" fill="#555"/><rect x="11" y="6" width="4" height="4" fill="#555"/><rect x="11" y="11" width="4" height="4" fill="#555"/></svg>
<svg style="position:absolute;left:40px;top:31px;" width="32" height="18" viewBox="0 0 32 18"><path d="M2 1h8l4 4v12H2z" fill="#5a5a5a"/><path d="M10 1v4h4" fill="#9a9a9a"/><path d="M20 8h7l-3.5 4z" fill="#555"/></svg>
<svg style="position:absolute;left:86px;top:31px;" width="18" height="17" viewBox="0 0 18 17"><path d="M1.5 1.5h12l3 3v11h-15z" fill="#8a8a8a"/><rect x="4" y="2" width="8" height="5" fill="#c9c9c9"/><rect x="4" y="9" width="9" height="6" fill="#c9c9c9"/><rect x="6" y="11" width="5" height="3" fill="#8a8a8a"/></svg>
<svg style="position:absolute;left:117px;top:30px;" width="32" height="20" viewBox="0 0 32 20"><path d="M4 9 C7 4 14 4 16 9" fill="none" stroke="#8a8a8a" stroke-width="2"/><path d="M1 9l6-4v8z" fill="#8a8a8a"/><path d="M22 8h6l-3 3.5z" fill="#8a8a8a"/></svg>
<svg style="position:absolute;left:157px;top:30px;" width="32" height="20" viewBox="0 0 32 20"><path d="M16 9 C13 4 6 4 4 9" fill="none" stroke="#8a8a8a" stroke-width="2"/><path d="M19 9l-6-4v8z" fill="#8a8a8a"/><path d="M22 8h6l-3 3.5z" fill="#8a8a8a"/></svg>
<div style="position:absolute;left:194px;top:27px;width:39px;height:28px;background:#b9b9b9;border-radius:2px 2px 0 0"></div>
<svg style="position:absolute;left:205px;top:33px;" width="18" height="18" viewBox="0 0 18 18"><path d="M9 2L1 9h2.5v7h4v-4h3v4h4V9H17z" fill="#6e6e6e"/></svg>
<div style="position:absolute;left:237px;top:27px;width:482px;height:28px;background:#f3f3f3;border-radius:2px 2px 0 0"></div>
<svg style="position:absolute;left:413px;top:34px;" width="14" height="15" viewBox="0 0 14 15"><path d="M7 1 L13 4 L13 11 L7 14 L1 11 L1 4Z" fill="#f0862a"/><path d="M7 1 L13 4 L7 7 L1 4Z" fill="#f7b26a"/><path d="M7 7 L13 4 L13 11 L7 14Z" fill="#d9661a"/></svg>
<div style="position:absolute;left:433.00px;top:35.43px;font-size:12.60px;line-height:12.60px;color:#222;white-space:nowrap;transform-origin:0 0;transform:scaleX(0.9995);">camshaft_section</div>
<svg style="position:absolute;left:702px;top:34px;" width="12" height="12" viewBox="0 0 12 12"><path d="M1.5 1.5l9 9M10.5 1.5l-9 9" stroke="#666" stroke-width="1.3"/></svg>
<div style="position:absolute;left:722px;top:27px;width:484px;height:28px;background:#bdbdbd"></div>
<svg style="position:absolute;left:909px;top:34px;" width="14" height="15" viewBox="0 0 14 15"><path d="M7 1 L13 4 L13 11 L7 14 L1 11 L1 4Z" fill="#f0862a"/><path d="M7 1 L13 4 L7 7 L1 4Z" fill="#f7b26a"/><path d="M7 7 L13 4 L13 11 L7 14Z" fill="#d9661a"/></svg>
<div style="position:absolute;left:929.00px;top:35.43px;font-size:12.60px;line-height:12.60px;color:#5a5a5a;white-space:nowrap;transform-origin:0 0;transform:scaleX(0.9981);">camshaft_end</div>
<svg style="position:absolute;left:1187px;top:34px;" width="12" height="12" viewBox="0 0 12 12"><path d="M1.5 1.5l9 9M10.5 1.5l-9 9" stroke="#777" stroke-width="1.3"/></svg>
<div style="position:absolute;left:1210px;top:27px;width:482px;height:28px;background:#bdbdbd"></div>
<svg style="position:absolute;left:1390px;top:34px;" width="14" height="15" viewBox="0 0 14 15"><path d="M7 1 L13 4 L13 11 L7 14 L1 11 L1 4Z" fill="#f0862a"/><path d="M7 1 L13 4 L7 7 L1 4Z" fill="#f7b26a"/><path d="M7 7 L13 4 L13 11 L7 14Z" fill="#d9661a"/></svg>
<div style="position:absolute;left:1410.00px;top:35.43px;font-size:12.60px;line-height:12.60px;color:#5a5a5a;white-space:nowrap;transform-origin:0 0;transform:scaleX(1.0119);">assy_camshaft*</div>
<svg style="position:absolute;left:1674px;top:34px;" width="12" height="12" viewBox="0 0 12 12"><path d="M1.5 1.5l9 9M10.5 1.5l-9 9" stroke="#888" stroke-width="1.3"/></svg>
<div style="position:absolute;left:1695px;top:27px;width:28px;height:28px;background:#bdbdbd"></div>
<svg style="position:absolute;left:1701px;top:33px;" width="16" height="16" viewBox="0 0 16 16"><path d="M8 2v12M2 8h12" stroke="#6a6a6a" stroke-width="2.4"/></svg>
<svg style="position:absolute;left:1734px;top:31px;" width="18" height="17" viewBox="0 0 18 17"><circle cx="8.5" cy="8.5" r="6.5" fill="none" stroke="#5c5c5c" stroke-width="2.6"/><path d="M8 8l5-5" stroke="#5c5c5c" stroke-width="2.4"/><path d="M10 1h6v6z" fill="#5c5c5c"/></svg>
<svg style="position:absolute;left:1767px;top:31px;" width="28" height="17" viewBox="0 0 28 17"><circle cx="8.5" cy="8.5" r="7" fill="none" stroke="#5c5c5c" stroke-width="2"/><circle cx="8.5" cy="8.5" r="4.3" fill="none" stroke="#5c5c5c" stroke-width="1.5"/><path d="M8.5 6v3h2.5" fill="none" stroke="#5c5c5c" stroke-width="1.3"/><path d="M21 3.5l1.8-1.2v12" fill="none" stroke="#5c5c5c" stroke-width="1.5"/></svg>
<svg style="position:absolute;left:1815px;top:30px;" width="18" height="18" viewBox="0 0 18 18"><path d="M9 2c-3 0-5 2.3-5 5.5v4L2.5 13.5h13L14 11.5v-4C14 4.3 12 2 9 2z" fill="#5c5c5c"/><circle cx="9" cy="15.5" r="1.6" fill="#5c5c5c"/></svg>
<svg style="position:absolute;left:1849px;top:31px;" width="18" height="17" viewBox="0 0 18 17"><circle cx="8.5" cy="8.5" r="8" fill="#5c5c5c"/><path d="M6 6.3c0-1.6 1.2-2.5 2.6-2.5s2.6.9 2.6 2.3c0 1.8-2.4 2-2.4 4" fill="none" stroke="#c9c9c9" stroke-width="1.8"/><circle cx="8.8" cy="13" r="1.1" fill="#c9c9c9"/></svg>
<div style="position:absolute;left:1885px;top:27px;width:25px;height:25px;border-radius:50%;background:#efefef"></div>
<div style="position:absolute;left:1889.50px;top:33.96px;font-size:11.50px;line-height:11.50px;color:#555;white-space:nowrap;transform-origin:0 0;transform:scaleX(0.9633);">DD</div>
<div style="position:absolute;left:0;top:55px;width:1920px;height:81px;background:#f3f3f3"></div>
<div style="position:absolute;left:0;top:136px;width:1920px;height:1px;background:#d8d8d8"></div>
<div style="position:absolute;left:12px;top:66px;width:109px;height:60px;background:#f5f5f5;border:1px solid #dcdcdc;border-radius:3px"></div>
<div style="position:absolute;left:43.50px;top:90.94px;font-size:10.50px;line-height:10.50px;color:#3a3a3a;white-space:nowrap;transform-origin:0 0;transform:scaleX(0.9191);font-weight:600;-webkit-text-stroke:0.2px #3a3a3a;">DESIGN</div>
<svg style="position:absolute;left:86px;top:93px;" width="8" height="6" viewBox="0 0 8 6"><path d="M0.5 0.5h6l-3 4z" fill="#333"/></svg>
<div style="position:absolute;left:151.00px;top:60.94px;font-size:10.50px;line-height:10.50px;color:#0696d7;white-space:nowrap;transform-origin:0 0;transform:scaleX(0.9838);">SOLID</div>
<div style="position:absolute;left:228.00px;top:60.94px;font-size:10.50px;line-height:10.50px;color:#3c3c3c;white-space:nowrap;transform-origin:0 0;transform:scaleX(0.9477);">SURFACE</div>
<div style="position:absolute;left:321.00px;top:60.94px;font-size:10.50px;line-height:10.50px;color:#3c3c3c;white-space:nowrap;transform-origin:0 0;transform:scaleX(0.9229);">MESH</div>
<div style="position:absolute;left:394.00px;top:60.94px;font-size:10.50px;line-height:10.50px;color:#3c3c3c;white-space:nowrap;transform-origin:0 0;transform:scaleX(0.9449);">SHEET METAL</div>
<div style="position:absolute;left:507.50px;top:60.94px;font-size:10.50px;line-height:10.50px;color:#3c3c3c;white-space:nowrap;transform-origin:0 0;transform:scaleX(0.9368);">PLASTIC</div>
<div style="position:absolute;left:595.00px;top:60.94px;font-size:10.50px;line-height:10.50px;color:#3c3c3c;white-space:nowrap;transform-origin:0 0;transform:scaleX(0.9888);">MANAGE</div>
<div style="position:absolute;left:688.00px;top:60.94px;font-size:10.50px;line-height:10.50px;color:#3c3c3c;white-space:nowrap;transform-origin:0 0;transform:scaleX(0.8774);">UTILITIES</div>
<div style="position:absolute;left:138px;top:75px;width:57px;height:3px;background:#0f88cc;border-radius:1px"></div>
<div style="position:absolute;left:256.00px;top:122.08px;font-size:10.20px;line-height:10.20px;color:#3c3c3c;white-space:nowrap;transform-origin:0 0;transform:scaleX(0.9602);">CREATE</div>
<svg style="position:absolute;left:298px;top:124px;" width="7" height="5" viewBox="0 0 7 5"><path d="M0 0.5h6l-3 3.8z" fill="#333"/></svg>
<div style="position:absolute;left:546.00px;top:122.08px;font-size:10.20px;line-height:10.20px;color:#3c3c3c;white-space:nowrap;transform-origin:0 0;transform:scaleX(0.9832);">MODIFY</div>
<svg style="position:absolute;left:588px;top:124px;" width="7" height="5" viewBox="0 0 7 5"><path d="M0 0.5h6l-3 3.8z" fill="#333"/></svg>
<div style="position:absolute;left:765.00px;top:122.08px;font-size:10.20px;line-height:10.20px;color:#3c3c3c;white-space:nowrap;transform-origin:0 0;transform:scaleX(1.0001);">ASSEMBLE</div>
<svg style="position:absolute;left:823px;top:124px;" width="7" height="5" viewBox="0 0 7 5"><path d="M0 0.5h6l-3 3.8z" fill="#333"/></svg>
<div style="position:absolute;left:904.00px;top:122.08px;font-size:10.20px;line-height:10.20px;color:#3c3c3c;white-space:nowrap;transform-origin:0 0;transform:scaleX(0.9314);">CONFIGURE</div>
<svg style="position:absolute;left:964px;top:124px;" width="7" height="5" viewBox="0 0 7 5"><path d="M0 0.5h6l-3 3.8z" fill="#333"/></svg>
<div style="position:absolute;left:1001.00px;top:122.08px;font-size:10.20px;line-height:10.20px;color:#3c3c3c;white-space:nowrap;transform-origin:0 0;transform:scaleX(0.9683);">CONSTRUCT</div>
<svg style="position:absolute;left:1066px;top:124px;" width="7" height="5" viewBox="0 0 7 5"><path d="M0 0.5h6l-3 3.8z" fill="#333"/></svg>
<div style="position:absolute;left:1100.00px;top:122.08px;font-size:10.20px;line-height:10.20px;color:#3c3c3c;white-space:nowrap;transform-origin:0 0;transform:scaleX(0.9274);">INSPECT</div>
<svg style="position:absolute;left:1144px;top:124px;" width="7" height="5" viewBox="0 0 7 5"><path d="M0 0.5h6l-3 3.8z" fill="#333"/></svg>
<div style="position:absolute;left:1191.00px;top:122.08px;font-size:10.20px;line-height:10.20px;color:#3c3c3c;white-space:nowrap;transform-origin:0 0;transform:scaleX(0.9403);">INSERT</div>
<svg style="position:absolute;left:1229px;top:124px;" width="7" height="5" viewBox="0 0 7 5"><path d="M0 0.5h6l-3 3.8z" fill="#333"/></svg>
<div style="position:absolute;left:1276.00px;top:122.08px;font-size:10.20px;line-height:10.20px;color:#3c3c3c;white-space:nowrap;transform-origin:0 0;transform:scaleX(0.9324);">SELECT</div>
<svg style="position:absolute;left:1316px;top:124px;" width="7" height="5" viewBox="0 0 7 5"><path d="M0 0.5h6l-3 3.8z" fill="#333"/></svg>
<div style="position:absolute;left:436px;top:80px;width:1px;height:52px;background:#dedede"></div>
<div style="position:absolute;left:706px;top:80px;width:1px;height:52px;background:#dedede"></div>
<div style="position:absolute;left:888px;top:80px;width:1px;height:52px;background:#dedede"></div>
<div style="position:absolute;left:987px;top:80px;width:1px;height:52px;background:#dedede"></div>
<div style="position:absolute;left:1086px;top:80px;width:1px;height:52px;background:#dedede"></div>
<div style="position:absolute;left:1165px;top:80px;width:1px;height:52px;background:#dedede"></div>
<div style="position:absolute;left:1262px;top:80px;width:1px;height:52px;background:#dedede"></div>
<svg style="position:absolute;left:136px;top:80px;" width="36" height="36" viewBox="0 0 36 36"><rect x="2.5" y="3.5" width="27" height="27" fill="none" stroke="#444" stroke-width="1.2"/><rect x="1" y="2" width="3" height="3" fill="#444"/><rect x="28" y="2" width="3" height="3" fill="#444"/><rect x="1" y="29" width="3" height="3" fill="#444"/><path d="M9 10h11M9 10v15" stroke="#444" stroke-width="1"/><path d="M9 25 C16 24 20 18 20 10" fill="none" stroke="#444" stroke-width="1"/><rect x="8" y="9" width="2.5" height="2.5" fill="#444"/><rect x="19" y="9" width="2.5" height="2.5" fill="#444"/><rect x="8" y="24" width="2.5" height="2.5" fill="#444"/><path d="M25.5 19v14M18.5 26h14" stroke="#1f9d3a" stroke-width="4"/></svg>
<svg style="position:absolute;left:179px;top:80px;" width="36" height="36" viewBox="0 0 36 36"><path d="M3 9 L8 2 H26 V28 L21 34 H3z" fill="#5aa5e6"/><path d="M3 9 L8 2 H26 L21 9z" fill="#8cc3f0"/><path d="M21 9 L26 2 V28 L21 34z" fill="#3d86c9"/><path d="M3 29h18l5-5v4l-5 6H3z" fill="#a9a9a9"/><path d="M30 4v28" stroke="#222" stroke-width="1.4"/><path d="M27.5 8l2.5-5 2.5 5z" fill="#222"/></svg>
<svg style="position:absolute;left:221px;top:80px;" width="36" height="36" viewBox="0 0 36 36"><path d="M2 15 C8 9 26 9 32 15 L32 26 C26 20 8 20 2 26z" fill="#5aa5e6"/><path d="M2 15 C8 9 26 9 32 15 L30 18 C24 13 10 13 4 18z" fill="#8cc3f0"/><path d="M27 17l5-3v11l-5 3z" fill="#fff" stroke="#333" stroke-width="1"/><path d="M5 7 C12 1 24 2 30 8" fill="none" stroke="#333" stroke-width="1.3"/><path d="M3 9l3-5 2 4z" fill="#333"/></svg>
<svg style="position:absolute;left:264px;top:80px;" width="36" height="36" viewBox="0 0 36 36"><path d="M1.5 8.5 L7.5 2.5 H33.5 V27.5 L27.5 33.5 H1.5z" fill="#dcdcdc" stroke="#555" stroke-width="1.2"/><path d="M27.5 8.5 L33.5 2.5 V27.5 L27.5 33.5z" fill="#bdbdbd"/><circle cx="16" cy="19" r="8" fill="#5aa5e6" stroke="#666" stroke-width="1"/><path d="M15 11 C19 13 22 16 23 21 C20 18 17 15 15 11z" fill="#fff"/></svg>
<svg style="position:absolute;left:308px;top:80px;" width="36" height="36" viewBox="0 0 36 36"><rect x="3.5" y="6.5" width="6" height="6" fill="#fff" stroke="#333" stroke-width="1.1"/><rect x="23" y="6" width="7" height="7" fill="#5aa5e6"/><rect x="3" y="26" width="7" height="7" fill="#5aa5e6"/><rect x="23" y="26" width="7" height="7" fill="#5aa5e6"/><path d="M10 9.5h13M6.5 13v13M10 29.5h13" stroke="#333" stroke-width="1"/></svg>
<svg style="position:absolute;left:350px;top:80px;" width="36" height="36" viewBox="0 0 36 36"><path d="M4 10 C4 5 8 3 14 3 H24 L30 10 V28 C30 32 26 34 20 34 H8 C5 34 3 32 3 28z" fill="#9b6fd9"/><path d="M4 10 C6 6 10 6 14 6 H22" fill="none" stroke="#c9a6f2" stroke-width="2"/><path d="M17 8v26M3 21h27" stroke="#6e46b0" stroke-width="0.8"/><path d="M26 1l1.5 4.5 4.5-1.5-3 3.5 3.5 3-4.5 0.5 0 4.5-2.5-3.8-3.5 2.8 1.2-4.4-4.2-1.6 4.6-1.2z" fill="#f5a20a"/></svg>
<svg style="position:absolute;left:393px;top:80px;" width="36" height="36" viewBox="0 0 36 36"><rect x="2.5" y="2.5" width="6" height="6" fill="#fff" stroke="#333" stroke-width="1.1"/><path d="M27 5l5 3-1.5 5.5h-6L23 8z" fill="#fff" stroke="#333" stroke-width="1.1"/><path d="M7 8 C12 14 14 18 15 24 M25 12 C20 16 18 20 17 24" fill="none" stroke="#3d86c9" stroke-width="3"/><circle cx="16" cy="28.5" r="4" fill="#fff" stroke="#333" stroke-width="1.6"/><circle cx="16" cy="28.5" r="1" fill="#333"/></svg>
<svg style="position:absolute;left:449px;top:80px;" width="36" height="36" viewBox="0 0 36 36"><path d="M1.5 6.5 L5 2 H9 V34 H1.5z" fill="#e8e4de" stroke="#555" stroke-width="1"/><path d="M8 6 L12 2 H22 V28 L18 34 H8z" fill="#5aa5e6"/><path d="M18 6 L22 2 V28 L18 34z" fill="#3d86c9"/><path d="M18 17h10" stroke="#222" stroke-width="1.3"/><path d="M27 14l4 3-4 3z" fill="#222"/></svg>
<svg style="position:absolute;left:490px;top:80px;" width="36" height="36" viewBox="0 0 36 36"><path d="M1.5 10 L9 2.5 H18 C26 2.5 32.5 9 32.5 17 V27 L27 33.5 H1.5z" fill="#d9d9d9" stroke="#555" stroke-width="1.1"/><path d="M14 3.5 C22 3.5 32 9 32 19 L27 25 C27 18 22 11 12 9z" fill="#5aa5e6"/><path d="M27 25 L32.5 19 V27 L27 33.5z" fill="#c4c4c4"/></svg>
<svg style="position:absolute;left:534px;top:80px;" width="36" height="36" viewBox="0 0 36 36"><path d="M1.5 8.5 L7.5 2.5 H33.5 V27.5 L27.5 33.5 H1.5z" fill="#e6e6e6" stroke="#555" stroke-width="1.1"/><path d="M27.5 8.5 L33.5 2.5 V27.5 L27.5 33.5z" fill="#c5c5c5"/><rect x="6" y="13" width="16" height="16" fill="#3d86c9"/><rect x="11" y="13" width="11" height="10" fill="#f3f3f3"/><rect x="6" y="23" width="16" height="6" fill="#8cc3f0"/></svg>
<svg style="position:absolute;left:576px;top:80px;" width="36" height="36" viewBox="0 0 36 36"><path d="M14 6 L18 2 H34 V20 L30 24 H14z" fill="#5aa5e6"/><path d="M2 17 L6 13 H22 V31 L18 35 H2z" fill="#5aa5e6"/><path d="M30 6 L34 2 V20 L30 24z" fill="#3d86c9"/></svg>
<svg style="position:absolute;left:620px;top:80px;" width="36" height="36" viewBox="0 0 36 36"><path d="M3 6 L7 2 H33 V16 L29 20 H3z" fill="#5aa5e6"/><path d="M29 6 L33 2 V16 L29 20z" fill="#3d86c9"/><path d="M0 22 H29 L34 17" stroke="#8cc3f0" stroke-width="1.6" fill="none"/><path d="M3 24 H29 L33 20 V30 L29 34 H3z" fill="#e2dedb" stroke="#555" stroke-width="0.9"/></svg>
<svg style="position:absolute;left:664px;top:80px;" width="36" height="36" viewBox="0 0 36 36"><path d="M16 3v30M1 18h30" stroke="#222" stroke-width="2.2"/><path d="M16 1l-5 6h10zM16 35l-5-6h10zM0 18l6-5v10zM32 18l-6-5v10z" fill="#222"/></svg>
<svg style="position:absolute;left:716px;top:80px;" width="36" height="36" viewBox="0 0 36 36"><path d="M6 8 L10 4 H30 V26 L26 30 H6z" fill="#d9d9d9" stroke="#555" stroke-width="1"/><path d="M26 8 L30 4 V26 L26 30z" fill="#c0c0c0"/><path d="M1 6h12" stroke="#1780d6" stroke-width="3.2"/><path d="M12 1l7 5-7 5z" fill="#1780d6"/><path d="M18 30 l6-6 M22 34 l6-6" stroke="#222" stroke-width="3" stroke-linecap="round"/><path d="M19 28 C17 31 20 35 23 32 M27 26 C29 23 26 19 23 22" fill="none" stroke="#222" stroke-width="2.2"/></svg>
<svg style="position:absolute;left:760px;top:80px;" width="36" height="36" viewBox="0 0 36 36"><path d="M1 8 L5 4 H17 V20 H1z" fill="#5aa5e6"/><rect x="1" y="19" width="27" height="15" fill="#dadada" stroke="#555" stroke-width="0.8"/><path d="M14 19v15" stroke="#555" stroke-width="0.8"/><path d="M23 1l1.5 4 4-1.5-2.5 3.5 3.5 2.5-4.5 0.5 0 4-2.5-3.5-3.5 2.5 1.5-4-4-1.5 4.5-1z" fill="#f5a20a"/></svg>
<svg style="position:absolute;left:803px;top:80px;" width="36" height="36" viewBox="0 0 36 36"><rect x="1.5" y="21.5" width="14" height="12" fill="#fff" stroke="#444" stroke-width="1"/><path d="M16 3v31" stroke="#c0203a" stroke-width="1.2"/><rect x="18" y="3" width="14" height="12" fill="#5aa5e6"/></svg>
<svg style="position:absolute;left:846px;top:80px;" width="36" height="36" viewBox="0 0 36 36"><rect x="1" y="1" width="7" height="7" fill="#5aa5e6"/><rect x="1.5" y="8.5" width="7" height="6" fill="#fff" stroke="#444" stroke-width="0.8"/><rect x="8.5" y="8.5" width="7" height="6" fill="#fff" stroke="#444" stroke-width="0.8"/><rect x="15.5" y="13.5" width="17" height="21" fill="#fff" stroke="#444" stroke-width="1"/><rect x="15.5" y="13.5" width="17" height="3" fill="#555"/><path d="M15.5 21h17M15.5 26h17M15.5 31h17M21 16v18" stroke="#444" stroke-width="0.8"/><path d="M6 15v18M6 20h4M6 25h4M6 30h4" stroke="#888" stroke-width="0.8"/></svg>
<svg style="position:absolute;left:900px;top:80px;" width="36" height="36" viewBox="0 0 36 36"><path d="M1.5 8.5 L7.5 2.5 H22.5 V25.5 H1.5z" fill="#e2e2e2" stroke="#555" stroke-width="1"/><path d="M16.5 8.5 L22.5 2.5 V25.5 L16.5 25.5z" fill="#c6c6c6"/><path d="M19 27h14M19 32h14" stroke="#555" stroke-width="1.8"/><path d="M22 24v6M28 29v6" stroke="#3d86c9" stroke-width="2"/></svg>
<svg style="position:absolute;left:943px;top:80px;" width="36" height="36" viewBox="0 0 36 36"><rect x="1.5" y="1.5" width="30" height="27" fill="#fff" stroke="#444" stroke-width="1.1"/><rect x="1.5" y="1.5" width="30" height="5" fill="#555"/><path d="M1.5 13h22M1.5 19h22M1.5 25h18M8 6.5v22M15 6.5v22" stroke="#444" stroke-width="1"/><path d="M20 29h14M20 33h14" stroke="#555" stroke-width="1.8"/><path d="M23 26v6M29 30v6" stroke="#3d86c9" stroke-width="2"/></svg>
<svg style="position:absolute;left:1020px;top:80px;" width="36" height="36" viewBox="0 0 36 36"><path d="M2.5 10 L8 4 V34 L2.5 34z" fill="#dcdcdc" stroke="#444" stroke-width="1"/><path d="M8 4 L14 1 V30 L8 34z" fill="#5fbf6a"/><path d="M22 7 L28 2 V28 L22 33z" fill="#f0914a"/></svg>
<svg style="position:absolute;left:1109px;top:80px;" width="36" height="36" viewBox="0 0 36 36"><path d="M2 9v7M30 9v7M2 12.5h28" stroke="#444" stroke-width="1.1"/><path d="M2 12.5l4-2.5v5zM30 12.5l-4-2.5v5z" fill="#444"/><rect x="1" y="18" width="30" height="8" fill="#f5b000"/><path d="M4 18v3M7 18v2M10 18v3M13 18v2M16 18v3M19 18v2M22 18v3M25 18v2M28 18v3" stroke="#a87800" stroke-width="0.8"/></svg>
<svg style="position:absolute;left:1178px;top:80px;" width="36" height="36" viewBox="0 0 36 36"><rect x="1" y="1" width="24" height="8" rx="1" fill="#5aa5e6"/><rect x="6" y="9" width="13" height="24" fill="#8cc3f0"/><path d="M6 13h13M6 17h13M6 21h13M6 25h13M6 29h13" stroke="#3d86c9" stroke-width="0.8"/><path d="M23 19v15M15.5 26.5h15" stroke="#2ea043" stroke-width="4"/></svg>
<svg style="position:absolute;left:1220px;top:80px;" width="36" height="36" viewBox="0 0 36 36"><rect x="1" y="2" width="30" height="28" fill="#8cc3f0"/><path d="M1 30 V18 C5 14 9 8 12 10 C15 12 16 18 19 19 C22 20 25 14 31 16 V30z" fill="#3d86c9"/><circle cx="24" cy="8" r="3" fill="#fff"/></svg>
<svg style="position:absolute;left:1279px;top:78px;" width="42" height="41" viewBox="0 0 42 41"><rect x="0" y="0" width="41" height="40" fill="#1590d8"/><rect x="4.5" y="4.5" width="28" height="22" fill="none" stroke="#bfe3fa" stroke-width="1.1" stroke-dasharray="3 2"/><path d="M25 17 L25 33 L28.5 29.5 L31 35 L33.5 34 L31 28.5 L35.5 28.5z" fill="#fff"/></svg>
<div style="position:absolute;left:4px;top:144px;width:300px;height:25px;background:#f2f2f2;border:1px solid #d2d2d2"></div>
<svg style="position:absolute;left:9px;top:152px;" width="12" height="10" viewBox="0 0 12 10"><path d="M5 1 L0.5 5 L5 9z M10.5 1 L6 5 L10.5 9z" fill="#333"/></svg>
<div style="position:absolute;left:29.60px;top:151.68px;font-size:10.00px;line-height:10.00px;color:#505050;white-space:nowrap;transform-origin:0 0;transform:scaleX(0.9948);">BROWSER</div>
<svg style="position:absolute;left:282px;top:151px;" width="11" height="11" viewBox="0 0 11 11"><circle cx="5.5" cy="5.5" r="5" fill="#222"/><path d="M2.8 5.5h5.4" stroke="#fff" stroke-width="1.4"/></svg>
<div style="position:absolute;left:40px;top:174px;width:192px;height:20px;background:rgba(243,243,243,0.92)"></div>
<svg style="position:absolute;left:20px;top:177px;" width="13" height="13" viewBox="0 0 13 13"><path d="M12 1 L12 12 L1 12z" fill="#555"/><path d="M11 4 L11 11 L4 11z" fill="#aaa"/></svg>
<svg style="position:absolute;left:42px;top:178px;" width="18" height="12" viewBox="0 0 18 12"><path d="M1 6 C4 1.5 14 1.5 17 6 C14 10.5 4 10.5 1 6z" fill="#b3b3b3"/><circle cx="9" cy="6" r="2.6" fill="#e8e8e8"/><circle cx="9" cy="6" r="1.4" fill="#9a9a9a"/></svg>
<div style="position:absolute;left:65px;top:176px;width:142px;height:16px;background:#8d8d8d"></div>
<svg style="position:absolute;left:68px;top:176px;" width="18" height="16" viewBox="0 0 18 16"><path d="M1.5 1.5h6v13h-6z" fill="#eee" stroke="#555" stroke-width="0.8"/><path d="M7.5 8.5h6l2 2v4h-8z" fill="#eee" stroke="#555" stroke-width="0.8"/></svg>
<div style="position:absolute;left:97.70px;top:178.60px;font-size:11.20px;line-height:11.20px;color:#ffffff;white-space:nowrap;font-weight:bold;transform-origin:0 0;transform:scaleX(1.0315);">camshaft_section</div>
<svg style="position:absolute;left:210px;top:177px;" width="15" height="15" viewBox="0 0 15 15"><circle cx="7.5" cy="7.5" r="6" fill="#fff" stroke="#222" stroke-width="1.3"/><circle cx="7.5" cy="7.5" r="2.4" fill="#222"/></svg>
<div style="position:absolute;left:58px;top:198px;width:134px;height:19px;background:rgba(243,243,243,0.92)"></div>
<svg style="position:absolute;left:39px;top:201px;" width="12" height="14" viewBox="0 0 12 14"><path d="M2 1.5 L10 7 L2 12.5z" fill="none" stroke="#333" stroke-width="1.4" stroke-linejoin="round"/></svg>
<svg style="position:absolute;left:61px;top:200px;" width="16" height="16" viewBox="0 0 16 16"><circle cx="8" cy="8" r="5" fill="none" stroke="#666" stroke-width="3"/><rect x="6.6" y="0.3" width="2.8" height="3.5" fill="#666" transform="rotate(0 8 8)"/><rect x="6.6" y="0.3" width="2.8" height="3.5" fill="#666" transform="rotate(45 8 8)"/><rect x="6.6" y="0.3" width="2.8" height="3.5" fill="#666" transform="rotate(90 8 8)"/><rect x="6.6" y="0.3" width="2.8" height="3.5" fill="#666" transform="rotate(135 8 8)"/><rect x="6.6" y="0.3" width="2.8" height="3.5" fill="#666" transform="rotate(180 8 8)"/><rect x="6.6" y="0.3" width="2.8" height="3.5" fill="#666" transform="rotate(225 8 8)"/><rect x="6.6" y="0.3" width="2.8" height="3.5" fill="#666" transform="rotate(270 8 8)"/><rect x="6.6" y="0.3" width="2.8" height="3.5" fill="#666" transform="rotate(315 8 8)"/></svg>
<div style="position:absolute;left:91.00px;top:202.89px;font-size:10.60px;line-height:10.60px;color:#2e2e2e;white-space:nowrap;transform-origin:0 0;transform:scaleX(0.9993);">Document Settings</div>
<div style="position:absolute;left:58px;top:222px;width:109px;height:19px;background:rgba(243,243,243,0.92)"></div>
<svg style="position:absolute;left:39px;top:225px;" width="12" height="14" viewBox="0 0 12 14"><path d="M2 1.5 L10 7 L2 12.5z" fill="none" stroke="#333" stroke-width="1.4" stroke-linejoin="round"/></svg>
<svg style="position:absolute;left:61px;top:225px;" width="17" height="14" viewBox="0 0 17 14"><path d="M0.5 1h6l1.5 2h8.5v10H0.5z" fill="#9e9e9e"/><rect x="0.5" y="4" width="16" height="9" fill="#a5a5a5"/></svg>
<div style="position:absolute;left:91.60px;top:226.89px;font-size:10.60px;line-height:10.60px;color:#2e2e2e;white-space:nowrap;transform-origin:0 0;transform:scaleX(1.0276);">Named Views</div>
<div style="position:absolute;left:58px;top:246px;width:95px;height:19px;background:rgba(243,243,243,0.92)"></div>
<svg style="position:absolute;left:39px;top:249px;" width="12" height="14" viewBox="0 0 12 14"><path d="M2 1.5 L10 7 L2 12.5z" fill="none" stroke="#333" stroke-width="1.4" stroke-linejoin="round"/></svg>
<svg style="position:absolute;left:60px;top:250px;" width="18" height="12" viewBox="0 0 18 12"><path d="M1 6 C4 1.5 14 1.5 17 6 C14 10.5 4 10.5 1 6z" fill="none" stroke="#b8b8b8" stroke-width="1.3"/><circle cx="9" cy="6" r="2.4" fill="none" stroke="#b8b8b8" stroke-width="1.2"/><path d="M3 11 L15 1" stroke="#b8b8b8" stroke-width="1.3"/></svg>
<svg style="position:absolute;left:86px;top:249px;" width="17" height="14" viewBox="0 0 17 14"><path d="M0.5 1h6l1.5 2h8.5v10H0.5z" fill="#9e9e9e"/><rect x="0.5" y="4" width="16" height="9" fill="#a5a5a5"/></svg>
<div style="position:absolute;left:116.50px;top:250.89px;font-size:10.60px;line-height:10.60px;color:#2e2e2e;white-space:nowrap;transform-origin:0 0;transform:scaleX(0.9690);">Origin</div>
<div style="position:absolute;left:58px;top:270px;width:114px;height:19px;background:rgba(243,243,243,0.92)"></div>
<svg style="position:absolute;left:39px;top:273px;" width="12" height="14" viewBox="0 0 12 14"><path d="M2 1.5 L10 7 L2 12.5z" fill="none" stroke="#333" stroke-width="1.4" stroke-linejoin="round"/></svg>
<svg style="position:absolute;left:60px;top:274px;" width="18" height="12" viewBox="0 0 18 12"><path d="M1 6 C4 1.5 14 1.5 17 6 C14 10.5 4 10.5 1 6z" fill="#b3b3b3"/><circle cx="9" cy="6" r="2.6" fill="#e8e8e8"/><circle cx="9" cy="6" r="1.4" fill="#9a9a9a"/></svg>
<svg style="position:absolute;left:86px;top:273px;" width="17" height="14" viewBox="0 0 17 14"><path d="M0.5 1h6l1.5 2h8.5v10H0.5z" fill="#9e9e9e"/><rect x="0.5" y="4" width="16" height="9" fill="#a5a5a5"/></svg>
<div style="position:absolute;left:116.50px;top:274.89px;font-size:10.60px;line-height:10.60px;color:#2e2e2e;white-space:nowrap;transform-origin:0 0;transform:scaleX(1.0000);">Sketches</div>
<div style="position:absolute;left:58px;top:294px;width:98px;height:19px;background:rgba(243,243,243,0.92)"></div>
<svg style="position:absolute;left:39px;top:297px;" width="12" height="14" viewBox="0 0 12 14"><path d="M2 1.5 L10 7 L2 12.5z" fill="none" stroke="#333" stroke-width="1.4" stroke-linejoin="round"/></svg>
<svg style="position:absolute;left:60px;top:298px;" width="18" height="12" viewBox="0 0 18 12"><path d="M1 6 C4 1.5 14 1.5 17 6 C14 10.5 4 10.5 1 6z" fill="#b3b3b3"/><circle cx="9" cy="6" r="2.6" fill="#e8e8e8"/><circle cx="9" cy="6" r="1.4" fill="#9a9a9a"/></svg>
<svg style="position:absolute;left:86px;top:295px;" width="18" height="18" viewBox="0 0 18 18"><path d="M5.5 6.5h10v10h-10z" fill="#e0e0e0" stroke="#444" stroke-width="0.9"/><path d="M5 1v7M2.5 3.5h5M2.5 6.5 C3 8.5 7 8.5 7.5 6.5" fill="none" stroke="#333" stroke-width="0.9"/></svg>
<div style="position:absolute;left:116.50px;top:298.89px;font-size:10.60px;line-height:10.60px;color:#2e2e2e;white-space:nowrap;transform-origin:0 0;transform:scaleX(0.9303);">main:1</div>
<div style="position:absolute;left:4px;top:953px;width:300px;height:25px;background:#f2f2f2;border:1px solid #d2d2d2"></div>
<div style="position:absolute;left:29.50px;top:960.28px;font-size:9.80px;line-height:9.80px;color:#505050;white-space:nowrap;transform-origin:0 0;transform:scaleX(0.9796);">COMMENTS</div>
<svg style="position:absolute;left:282px;top:960px;" width="11" height="11" viewBox="0 0 11 11"><circle cx="5.5" cy="5.5" r="5" fill="#222"/><path d="M2.8 5.5h5.4M5.5 2.8v5.4" stroke="#fff" stroke-width="1.4"/></svg>
<div style="position:absolute;left:843px;top:952px;width:234px;height:24px;background:#f0f0f0"></div>
<svg style="position:absolute;left:845px;top:955px;" width="18" height="18" viewBox="0 0 18 18"><path d="M9 2v15M6 5l3-3 3 3" fill="none" stroke="#222" stroke-width="1.4"/><path d="M4 9 C0 11 2 14 9 14 C14 14 17 12 15 10" fill="none" stroke="#222" stroke-width="1.5"/><path d="M2.5 11 L5 14 L2 15z" fill="#222"/></svg>
<svg style="position:absolute;left:866px;top:961px;" width="7" height="6" viewBox="0 0 7 6"><path d="M0.5 0.5h6l-3 4z" fill="#222"/></svg>
<svg style="position:absolute;left:877px;top:955px;" width="18" height="18" viewBox="0 0 18 18"><rect x="1.5" y="7.5" width="15" height="9" fill="none" stroke="#333" stroke-width="1.3"/><rect x="4.5" y="10" width="9" height="4" fill="#777"/><path d="M3 6 L7 3 L8 6 M10 6 L13 2 L14 6" fill="none" stroke="#333" stroke-width="1.2"/></svg>
<svg style="position:absolute;left:903px;top:954px;" width="18" height="19" viewBox="0 0 18 19"><path d="M5.5 17.5 C4 15.5 1.5 12 1.5 10 C1.5 9 3 8.5 4.5 10.5 V3.5 C4.5 2.3 6.5 2.3 6.5 3.5 V8 V2 C6.5 0.8 8.5 0.8 8.5 2 V8 V2.5 C8.5 1.3 10.5 1.3 10.5 2.5 V8.5 V4.5 C10.5 3.3 12.5 3.3 12.5 4.5 V12 C12.5 15 11 17.5 10 17.5z" fill="#fff" stroke="#222" stroke-width="1.1" stroke-linejoin="round"/></svg>
<svg style="position:absolute;left:928px;top:954px;" width="19" height="19" viewBox="0 0 19 19"><circle cx="6.5" cy="9.5" r="4.8" fill="#eef3f8" stroke="#333" stroke-width="1.3"/><path d="M10 13 L14 17" stroke="#333" stroke-width="2.2"/><path d="M14 1v6M11 4h6M11 9h6" stroke="#333" stroke-width="1.1"/></svg>
<svg style="position:absolute;left:954px;top:954px;" width="19" height="19" viewBox="0 0 19 19"><circle cx="7.5" cy="7.5" r="6" fill="none" stroke="#333" stroke-width="1.4"/><rect x="5" y="5" width="5" height="5" fill="none" stroke="#333" stroke-width="1"/><path d="M12 12 L17 17" stroke="#333" stroke-width="2.4"/></svg>
<svg style="position:absolute;left:977px;top:961px;" width="7" height="6" viewBox="0 0 7 6"><path d="M0.5 0.5h6l-3 4z" fill="#222"/></svg>
<svg style="position:absolute;left:988px;top:955px;" width="18" height="18" viewBox="0 0 18 18"><rect x="1.5" y="1.5" width="15" height="12" fill="#a9bde4" stroke="#444" stroke-width="1.3"/><path d="M6 16h6M9 14v2" stroke="#444" stroke-width="1.3"/></svg>
<svg style="position:absolute;left:1008px;top:961px;" width="7" height="6" viewBox="0 0 7 6"><path d="M0.5 0.5h6l-3 4z" fill="#222"/></svg>
<svg style="position:absolute;left:1019px;top:955px;" width="18" height="18" viewBox="0 0 18 18"><rect x="1.5" y="1.5" width="15" height="15" fill="none" stroke="#555" stroke-width="1"/><path d="M5.25 1.5v15M9 1.5v15M12.75 1.5v15M1.5 5.25h15M1.5 9h15M1.5 12.75h15" stroke="#555" stroke-width="0.9"/></svg>
<svg style="position:absolute;left:1040px;top:961px;" width="7" height="6" viewBox="0 0 7 6"><path d="M0.5 0.5h6l-3 4z" fill="#222"/></svg>
<svg style="position:absolute;left:1050px;top:955px;" width="18" height="18" viewBox="0 0 18 18"><rect x="1.5" y="1.5" width="15" height="15" fill="#a9bde4" stroke="#3a5a99" stroke-width="1.3"/><path d="M9 1.5v15M1.5 9h15" stroke="#3a5a99" stroke-width="1.3"/><rect x="3.5" y="3.5" width="3.5" height="3.5" fill="none" stroke="#3a5a99" stroke-width="0.8"/></svg>
<svg style="position:absolute;left:1072px;top:961px;" width="7" height="6" viewBox="0 0 7 6"><path d="M0.5 0.5h6l-3 4z" fill="#222"/></svg>
<svg style="position:absolute;left:1891px;top:957px;" width="17" height="17" viewBox="0 0 17 17"><path d="M8.5 1 C13 1 16 4 16 8.5 V16 H8.5 C4 16 1 13 1 8.5 C1 4 4 1 8.5 1z" fill="#111"/><path d="M4 10l8-5M5 12l8-5M7 12.5l6-4" stroke="#ddd" stroke-width="0.8"/></svg>
<div style="position:absolute;left:0;top:982px;width:1920px;height:50px;background:#f0f0f0"></div>
<div style="position:absolute;left:0;top:982px;width:1920px;height:1px;background:#d5d5d5"></div>
<svg style="position:absolute;left:10px;top:999px;" width="115" height="16" viewBox="0 0 115 16"><path d="M1.5 1v14" stroke="#555" stroke-width="2"/><path d="M12.5 1.5 L3 8 L12.5 14.5z" fill="#555"/><path d="M25 8 L35 1.5 V14.5z" fill="#555"/><path d="M37.5 4v8" stroke="#555" stroke-width="2.2"/><path d="M51 1 L63 8 L51 15z" fill="#555"/><path d="M75 4v8" stroke="#555" stroke-width="2.2"/><path d="M77.5 1.5 L88 8 L77.5 14.5z" fill="#555"/><path d="M100.5 1.5 L110 8 L100.5 14.5z" fill="#555"/><path d="M111.5 1v14" stroke="#555" stroke-width="2"/></svg>
<svg style="position:absolute;left:146px;top:998px;" width="17" height="17" viewBox="0 0 17 17"><rect x="1.5" y="1.5" width="13" height="13" fill="none" stroke="#4a8fd0" stroke-width="0.9" stroke-dasharray="2 1"/><path d="M5 5v7h4" fill="none" stroke="#666" stroke-width="0.8"/><path d="M9 13 L15 8" stroke="#f08a30" stroke-width="2"/></svg>
<svg style="position:absolute;left:170px;top:998px;" width="17" height="17" viewBox="0 0 17 17"><path d="M1 4 L4 1 H15 V13 L12 16 H1z" fill="#5aa5e6"/><path d="M12 4 L15 1 V13 L12 16z" fill="#3d86c9"/><path d="M16 2v12" stroke="#777" stroke-width="0.8"/></svg>
<svg style="position:absolute;left:194px;top:998px;" width="17" height="17" viewBox="0 0 17 17"><path d="M1 4 L4 1 H15 V13 L12 16 H1z" fill="#5aa5e6"/><path d="M12 4 L15 1 V13 L12 16z" fill="#3d86c9"/><path d="M16 2v12" stroke="#777" stroke-width="0.8"/></svg>
<svg style="position:absolute;left:217.5px;top:998px;" width="17" height="17" viewBox="0 0 17 17"><path d="M1 4 L4 1 H15 V13 L12 16 H1z" fill="#5aa5e6"/><path d="M12 4 L15 1 V13 L12 16z" fill="#3d86c9"/><path d="M16 2v12" stroke="#777" stroke-width="0.8"/></svg>
<svg style="position:absolute;left:241px;top:998px;" width="17" height="17" viewBox="0 0 17 17"><path d="M1 4 L4 1 H15 V13 L12 16 H1z" fill="#5aa5e6"/><path d="M12 4 L15 1 V13 L12 16z" fill="#3d86c9"/><path d="M16 2v12" stroke="#777" stroke-width="0.8"/></svg>
<svg style="position:absolute;left:265px;top:998px;" width="17" height="17" viewBox="0 0 17 17"><path d="M6 3 L8 1 H16 V9 L14 11 H6z" fill="#5aa5e6"/><path d="M1 8 L3 6 H11 V14 L9 16 H1z" fill="#4b96d8"/></svg>
<svg style="position:absolute;left:290px;top:998px;" width="17" height="17" viewBox="0 0 17 17"><rect x="1.5" y="1.5" width="13" height="13" fill="none" stroke="#4a8fd0" stroke-width="0.9" stroke-dasharray="2 1"/><path d="M5 5v7h4" fill="none" stroke="#666" stroke-width="0.8"/><path d="M9 13 L15 8" stroke="#f08a30" stroke-width="2"/></svg>
<svg style="position:absolute;left:314px;top:998px;" width="17" height="17" viewBox="0 0 17 17"><path d="M1 4 L4 1 H15 V13 L12 16 H1z" fill="#5aa5e6"/><path d="M12 4 L15 1 V13 L12 16z" fill="#3d86c9"/><path d="M16 2v12" stroke="#777" stroke-width="0.8"/></svg>
<svg style="position:absolute;left:337.5px;top:998px;" width="17" height="17" viewBox="0 0 17 17"><rect x="1.5" y="1.5" width="13" height="13" fill="none" stroke="#4a8fd0" stroke-width="0.9" stroke-dasharray="2 1"/><path d="M5 5v7h4" fill="none" stroke="#666" stroke-width="0.8"/><path d="M9 13 L15 8" stroke="#f08a30" stroke-width="2"/></svg>
<svg style="position:absolute;left:361px;top:998px;" width="17" height="17" viewBox="0 0 17 17"><path d="M1 4 L4 1 H15 V13 L12 16 H1z" fill="#5aa5e6"/><path d="M12 4 L15 1 V13 L12 16z" fill="#3d86c9"/><path d="M16 2v12" stroke="#777" stroke-width="0.8"/></svg>
<svg style="position:absolute;left:386px;top:998px;" width="17" height="17" viewBox="0 0 17 17"><rect x="1.5" y="0.5" width="6" height="6" rx="1.5" fill="#fff" stroke="#666" stroke-width="0.9"/><path d="M3 9v3h3" fill="none" stroke="#333" stroke-width="0.9"/><path d="M7 10 L9 8 H15 V14 L13 16 H7z" fill="#5aa5e6"/></svg>
<svg style="position:absolute;left:154px;top:1019px;" width="242" height="6" viewBox="0 0 242 6"><path d="M0.5 4.5h240" stroke="#bbb" stroke-width="1.2"/><path d="M0.5 0v4" stroke="#bbb" stroke-width="1"/><path d="M24.0 0v4" stroke="#bbb" stroke-width="1"/><path d="M48.0 0v4" stroke="#bbb" stroke-width="1"/><path d="M72.0 0v4" stroke="#bbb" stroke-width="1"/><path d="M96.0 0v4" stroke="#bbb" stroke-width="1"/><path d="M120.0 0v4" stroke="#bbb" stroke-width="1"/><path d="M144.0 0v4" stroke="#bbb" stroke-width="1"/><path d="M168.0 0v4" stroke="#bbb" stroke-width="1"/><path d="M192.0 0v4" stroke="#bbb" stroke-width="1"/><path d="M216.0 0v4" stroke="#bbb" stroke-width="1"/><path d="M240.5 0v4" stroke="#bbb" stroke-width="1"/></svg>
<svg style="position:absolute;left:399px;top:991px;" width="14" height="34" viewBox="0 0 14 34"><path d="M1 1h12l-4 6h-4z" fill="#555"/><path d="M7 5v28" stroke="#555" stroke-width="2.4"/></svg>
<svg style="position:absolute;left:1890px;top:998px;" width="17" height="17" viewBox="0 0 17 17"><circle cx="8.5" cy="8.5" r="4.2" fill="none" stroke="#777" stroke-width="2.8"/><rect x="7.2" y="1" width="2.6" height="3.2" fill="#777" transform="rotate(0 8.5 8.5)"/><rect x="7.2" y="1" width="2.6" height="3.2" fill="#777" transform="rotate(45 8.5 8.5)"/><rect x="7.2" y="1" width="2.6" height="3.2" fill="#777" transform="rotate(90 8.5 8.5)"/><rect x="7.2" y="1" width="2.6" height="3.2" fill="#777" transform="rotate(135 8.5 8.5)"/><rect x="7.2" y="1" width="2.6" height="3.2" fill="#777" transform="rotate(180 8.5 8.5)"/><rect x="7.2" y="1" width="2.6" height="3.2" fill="#777" transform="rotate(225 8.5 8.5)"/><rect x="7.2" y="1" width="2.6" height="3.2" fill="#777" transform="rotate(270 8.5 8.5)"/><rect x="7.2" y="1" width="2.6" height="3.2" fill="#777" transform="rotate(315 8.5 8.5)"/></svg>
</body></html>
